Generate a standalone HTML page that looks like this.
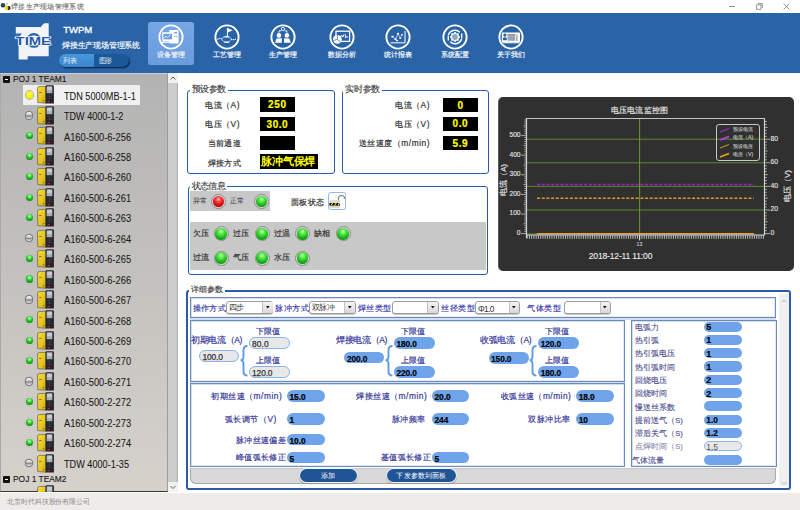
<!DOCTYPE html>
<html><head><meta charset="utf-8">
<style>
*{margin:0;padding:0;box-sizing:border-box}
html,body{width:800px;height:510px;overflow:hidden;background:#fff;font-family:"Liberation Sans",sans-serif}
.a{position:absolute}
.t{position:absolute;white-space:nowrap;line-height:1}
svg{position:absolute;overflow:visible}
</style></head><body>
<svg style="left:0;top:0" width="12" height="12" viewBox="0 0 12 12"><circle cx="7" cy="3.8" r="1.1" fill="#b0dcb0"/><circle cx="3" cy="5.2" r="2.2" fill="#1a3040"/><circle cx="3.2" cy="4.8" r="1" fill="#2a7090"/><circle cx="8.6" cy="8" r="2" fill="#20203a"/><circle cx="6.5" cy="8" r="1.9" fill="#f4d400"/></svg>
<div class="t" style="left:11px;top:2.6px;font-size:7.4px;color:#707070;letter-spacing:0.300px;-webkit-text-stroke:0.1px #707070;"><span id="tx0">焊接生产现场管理系统</span></div>
<div class="a" style="left:729px;top:5.6px;width:6px;height:0.9px;background:#8a8a8a"></div>
<svg style="left:755.5px;top:3.2px" width="7" height="7"><path d="M1.8 0.5 H6.3 V5 M0.5 1.8 H5 V6.3 H0.5 Z" fill="none" stroke="#8a8a8a" stroke-width="0.9"/></svg>
<svg style="left:782.5px;top:3px" width="7" height="7"><path d="M0.5 0.5 L6.5 6.5 M6.5 0.5 L0.5 6.5" stroke="#8a8a8a" stroke-width="0.9"/></svg>
<div class="a" style="left:0px;top:13px;width:800px;height:60px;background:#2a64a6"></div>
<svg style="left:10px;top:20px" width="50" height="42" viewBox="0 0 50 42">
<path d="M5.8 7 L31.3 7 L31.3 6 L34.3 3.3 L38.7 3.3 L38.7 36.2 L17.7 36.2 L17.7 39.5 L8.6 39.5 L8.6 17 L5.8 13.6 Z" fill="#f2f4f7"/>
<path d="M5.8 13.6 L12 13.6 L8.6 17.5Z" fill="#2a64a6"/>
<circle cx="23.9" cy="20.4" r="6.3" fill="none" stroke="#2a64a6" stroke-width="2.3"/>
<text x="5.6" y="24.6" textLength="35.4" lengthAdjust="spacingAndGlyphs" font-family="Liberation Sans" font-weight="bold" font-size="10" fill="#1f5aa6" stroke="#fff" stroke-width="1.2" paint-order="stroke">TIME</text>
</svg>
<div class="t" style="left:63.3px;top:25.2px;font-size:9.6px;color:#fff;letter-spacing:-0.128px;-webkit-text-stroke:0.3px #fff;"><span id="tx1">TWPM</span></div>
<div class="t" style="left:62px;top:42.3px;font-size:7.8px;color:#fff;letter-spacing:-0.200px;-webkit-text-stroke:0.15px #fff;"><span id="tx2">焊接生产现场管理系统</span></div>
<div class="a" style="left:59.4px;top:54.4px;width:70px;height:13.1px;border-radius:6.6px;background:#1a5898;box-shadow:1px 1.2px 1px #0c2a52"></div>
<div class="a" style="left:59.4px;top:54.4px;width:34.4px;height:13.1px;border-radius:6.6px 0 0 6.6px;background:linear-gradient(#4896dc,#3a86cc)"></div>
<div class="t" style="left:63px;top:58px;font-size:6.6px;color:#eaf2fa;letter-spacing:-0.400px;"><span id="tx3">列表</span></div>
<div class="t" style="left:98.75px;top:58px;font-size:6.6px;color:#eaf2fa;letter-spacing:-0.750px;"><span id="tx4">图形</span></div>
<div class="a" style="left:147.5px;top:21.7px;width:46.5px;height:43px;border-radius:2.5px;background:linear-gradient(#76a6e4,#6a9bdc)"></div>
<svg style="left:158.1px;top:23.5px" width="26" height="26" viewBox="0 0 26 26"><circle cx="13" cy="13" r="11.6" fill="none" stroke="#fff" stroke-width="1.9"/><rect x="11.3" y="5.9" width="9.3" height="13.5" rx="0.8" fill="#fff"/><rect x="16.2" y="8" width="3" height="1.3" fill="#6d9fdf"/><rect x="16.2" y="12" width="1.2" height="1" fill="#6d9fdf"/><rect x="18" y="12" width="1.2" height="1" fill="#6d9fdf"/><rect x="4.2" y="8.3" width="11.1" height="9" rx="0.6" fill="#fff"/><rect x="5.4" y="9.8" width="8.6" height="5.6" fill="#6d9fdf"/><path d="M6 14.5 L8 12 L9.5 13.5 L12.5 10.5" stroke="#fff" stroke-width="0.7" fill="none"/><rect x="3.5" y="17.6" width="8" height="1.3" fill="#fff"/></svg>
<div class="t" style="left:21.099999999999994px;width:300px;text-align:center;top:52.2px;font-size:6.8px;color:#f0f4fa;-webkit-text-stroke:0.2px #f0f4fa;"><span id="tx5">设备管理</span></div>
<svg style="left:214.0px;top:23.5px" width="26" height="26" viewBox="0 0 26 26"><circle cx="13" cy="13" r="11.6" fill="none" stroke="#fff" stroke-width="1.9"/><line x1="13.4" y1="3.8" x2="13.4" y2="12.8" stroke="#fff" stroke-width="1"/><path d="M13.4 4 L18.6 6.3 L13.4 8.8Z" fill="#fff"/><ellipse cx="12.6" cy="15.2" rx="4.6" ry="2.8" fill="none" stroke="#fff" stroke-width="0.9" stroke-dasharray="1.4 0.8"/><path d="M3.5 15.5 Q6 13.6 8 15 M17.2 15.2 Q19.5 16.2 22.5 14.8" stroke="#fff" stroke-width="1.1" fill="none" stroke-dasharray="1.2 0.6"/><rect x="10.3" y="12.3" width="4.8" height="1.2" fill="#fff"/><rect x="10.5" y="17.7" width="4.6" height="1.2" fill="#fff"/></svg>
<div class="t" style="left:77px;width:300px;text-align:center;top:52.2px;font-size:6.8px;color:#f0f4fa;-webkit-text-stroke:0.2px #f0f4fa;"><span id="tx6">工艺管理</span></div>
<svg style="left:270.0px;top:23.5px" width="26" height="26" viewBox="0 0 26 26"><circle cx="13" cy="13" r="11.6" fill="none" stroke="#fff" stroke-width="1.9"/><circle cx="12.9" cy="5" r="1.6" fill="none" stroke="#fff" stroke-width="0.9"/><path d="M9 8.8 V6.8 H11.3 M14.5 6.8 H16.9 V8.8" stroke="#fff" stroke-width="0.9" fill="none"/><circle cx="8.9" cy="11.4" r="2.3" fill="#fff"/><circle cx="16.9" cy="11.4" r="2.3" fill="#fff"/><path d="M5 18.7 L6.5 14.6 L11.8 14.2 L11.8 18.7Z M14 18.7 L14 14.2 L19.3 14.6 L20.8 18.7Z" fill="#fff"/></svg>
<div class="t" style="left:133px;width:300px;text-align:center;top:52.2px;font-size:6.8px;color:#f0f4fa;-webkit-text-stroke:0.2px #f0f4fa;"><span id="tx7">生产管理</span></div>
<svg style="left:328.5px;top:23.5px" width="26" height="26" viewBox="0 0 26 26"><circle cx="13" cy="13" r="11.6" fill="none" stroke="#fff" stroke-width="1.9"/><rect x="7" y="7.2" width="13.6" height="10.2" fill="none" stroke="#fff" stroke-width="1.3"/><path d="M11 15 L12.5 11 L14 13 L15.2 10 M16.5 10.5 V14 M18 12 V14" stroke="#fff" stroke-width="0.9" fill="none"/><circle cx="8.4" cy="15.3" r="4.4" fill="#fff"/><path d="M8.4 15.3 V10.9 M8.4 15.3 L4.2 16.5 M8.4 15.3 L11.6 18.3" stroke="#2a64a6" stroke-width="0.7"/></svg>
<div class="t" style="left:191.5px;width:300px;text-align:center;top:52.2px;font-size:6.8px;color:#f0f4fa;-webkit-text-stroke:0.2px #f0f4fa;"><span id="tx8">数据分析</span></div>
<svg style="left:384.7px;top:23.5px" width="26" height="26" viewBox="0 0 26 26"><circle cx="13" cy="13" r="11.6" fill="none" stroke="#fff" stroke-width="1.9"/><path d="M5.6 18.8 H20 V7" stroke="#fff" stroke-width="1" fill="none"/><path d="M7.5 12.6 L10.5 15.2 L13 9.6 L15.2 14.2 L17 10.8" stroke="#fff" stroke-width="0.6" fill="none"/><ellipse cx="7.5" cy="12.6" rx="1.3" ry="0.9" fill="#fff"/><ellipse cx="10.5" cy="15.2" rx="1.2" ry="0.9" fill="#fff"/><ellipse cx="12" cy="16.6" rx="1.2" ry="0.8" fill="#fff"/><ellipse cx="13" cy="9.6" rx="1.1" ry="0.9" fill="#fff"/><ellipse cx="15.2" cy="14.2" rx="1" ry="0.8" fill="#fff"/><ellipse cx="17" cy="10.8" rx="1" ry="0.8" fill="#fff"/></svg>
<div class="t" style="left:247.7px;width:300px;text-align:center;top:52.2px;font-size:6.8px;color:#f0f4fa;-webkit-text-stroke:0.2px #f0f4fa;"><span id="tx9">统计报表</span></div>
<svg style="left:442.2px;top:23.5px" width="26" height="26" viewBox="0 0 26 26"><circle cx="13" cy="13" r="11.6" fill="none" stroke="#fff" stroke-width="1.9"/><path d="M17.8 8.2 A6.9 6.9 0 0 0 6.3 11.5 M8.2 17.8 A6.9 6.9 0 0 0 19.7 14.5" stroke="#fff" stroke-width="1.4" fill="none"/><path d="M19.7 9.5 V14" stroke="#fff" stroke-width="1.4"/><path d="M6.3 12 V16.5" stroke="#fff" stroke-width="1.4"/><circle cx="13" cy="13" r="4.1" fill="#fff"/><g fill="#fff"><rect x="12.2" y="8" width="1.6" height="10"/><rect x="8" y="12.2" width="10" height="1.6"/><rect x="12.2" y="8" width="1.6" height="10" transform="rotate(45 13 13)"/><rect x="12.2" y="8" width="1.6" height="10" transform="rotate(-45 13 13)"/></g><circle cx="13" cy="13" r="2.9" fill="#8aa6c8"/></svg>
<div class="t" style="left:305.2px;width:300px;text-align:center;top:52.2px;font-size:6.8px;color:#f0f4fa;-webkit-text-stroke:0.2px #f0f4fa;"><span id="tx10">系统配置</span></div>
<svg style="left:497.7px;top:23.5px" width="26" height="26" viewBox="0 0 26 26"><circle cx="13" cy="13" r="11.6" fill="none" stroke="#fff" stroke-width="1.9"/><rect x="3.8" y="8.6" width="18.2" height="9.6" rx="0.8" fill="#fff"/><rect x="4.6" y="18" width="16.8" height="1.3" fill="#dfe6ee"/><circle cx="6.9" cy="11.1" r="1.6" fill="#2a64a6"/><path d="M5 16.3 V13.8 Q6.9 12.8 8.8 13.8 V16.3Z" fill="#2a64a6"/><rect x="9.6" y="10" width="7.6" height="6.6" fill="#8894a4"/><path d="M9.6 11.3 H17.2 M9.6 12.6 H17.2 M9.6 13.9 H17.2 M9.6 15.2 H17.2" stroke="#c8d0da" stroke-width="0.4"/><rect x="18.3" y="10.4" width="1.2" height="6.6" fill="#8894a4"/></svg>
<div class="t" style="left:360.7px;width:300px;text-align:center;top:52.2px;font-size:6.8px;color:#f0f4fa;-webkit-text-stroke:0.2px #f0f4fa;"><span id="tx11">关于我们</span></div>
<div class="a" style="left:0px;top:73px;width:168px;height:419px;background:linear-gradient(#b3b3b3,#c4c2be 50%,#d6d1cb);border-left:1px solid #a8a8a8;border-right:1px solid #9c9c9c;border-bottom:1px solid #3a3630;border-top:1px solid #d0d0d0"></div>
<div class="a" style="left:168px;top:73px;width:10px;height:419px;background:#cdcdcd;box-shadow:inset -1px 0 1px #b0b0b0"></div>
<div class="a" style="left:168px;top:73px;width:10px;height:10px;background:#f0f0f0"></div>
<div class="a" style="left:168px;top:482px;width:10px;height:10px;background:#f0f0f0"></div>
<svg style="left:168px;top:73px" width="10" height="10"><path d="M2.5 6.5 L5 4 L7.5 6.5" fill="none" stroke="#606060" stroke-width="1"/></svg>
<svg style="left:168px;top:482px" width="10" height="10"><path d="M2.5 4 L5 6.5 L7.5 4" fill="none" stroke="#606060" stroke-width="1"/></svg>
<div class="a" style="left:178px;top:73px;width:622px;height:420px;background:#fff"></div>
<div class="a" style="left:0px;top:493.4px;width:800px;height:17px;background:#efebe9"></div>
<div class="t" style="left:7px;top:498px;font-size:7.2px;color:#8a8a8a;letter-spacing:-0.083px;"><span id="tx12">北京时代科技股份有限公司</span></div>
<div class="a" style="left:23px;top:85px;width:117px;height:20px;background:#f0f0f0"></div>
<div class="a" style="left:2.75px;top:75.9px;width:7px;height:7px;background:#111;border-radius:1px"></div>
<div class="a" style="left:4.5px;top:78.9px;width:3.5px;height:1.2px;background:#fff"></div>
<div class="t" style="left:12.75px;top:73.5px;font-size:9.8px;color:#111;transform:scaleX(0.8569);transform-origin:0 0;-webkit-text-stroke:0.1px #111;"><span id="tx13">POJ 1 TEAM1</span></div>
<div class="a" style="left:25.55px;top:91.25px;width:7.4px;height:7.4px;border-radius:50%;background:radial-gradient(circle at 50% 40%,#ffff70,#f4f400 50%,#d0d000);box-shadow:0 0 0 0.9px #b0a8c0"></div>
<svg style="left:36.5px;top:85.45px" width="18" height="19" viewBox="0 0 18 19">
<defs><linearGradient id="yg" x1="0" y1="0" x2="1" y2="1"><stop offset="0" stop-color="#f4dc3a"/><stop offset="0.6" stop-color="#e8c41c"/><stop offset="1" stop-color="#c8a010"/></linearGradient></defs>
<path d="M0.5 3.4 Q0.5 1.6 2.3 1.5 L8.8 1.3 L8.8 18.2 L0.7 17.6 Z" fill="url(#yg)" stroke="#4a4a5a" stroke-width="0.6"/>
<rect x="2.2" y="7" width="2.2" height="0.8" fill="#6a5a20"/><rect x="6" y="15.2" width="1.2" height="0.9" fill="#6a5a20"/>
<path d="M8.6 1.2 Q8.6 0.3 9.6 0.3 L15.6 0.3 Q16.9 0.3 16.9 1.6 L16.9 18.4 L8.6 18.4 Z" fill="#22222a"/>
<rect x="9.6" y="1.3" width="5.8" height="7" rx="0.6" fill="#a8b0b4"/><rect x="10.2" y="2" width="4.6" height="3.2" fill="#c8ced0"/>
<path d="M9.9 10 H15.2 M9.9 11.8 H15.2 M9.9 13.6 H15.2 M12.5 9.2 V14.4" stroke="#44444e" stroke-width="0.6"/>
<rect x="10.6" y="15.9" width="2" height="1.3" fill="#e02020"/>
</svg>
<div class="t" style="left:64.4px;top:91.60px;font-size:10.2px;color:#151515;transform:scaleX(0.8993);transform-origin:0 0;-webkit-text-stroke:0.05px #151515;"><span id="tx14">TDN 5000MB-1-1</span></div>
<div class="a" style="left:25.70px;top:112.00px;width:6.8px;height:6.8px;border-radius:50%;background:linear-gradient(#f8f8f8 0,#d4d4d4 35%,#858585 55%,#b8b8b8 75%,#e4e4e4 100%);box-shadow:0 0 0 1px #7a7a7a, 0 0 0 2px rgba(190,180,200,.45)"></div>
<svg style="left:36.5px;top:105.90px" width="18" height="19" viewBox="0 0 18 19">
<defs><linearGradient id="yg" x1="0" y1="0" x2="1" y2="1"><stop offset="0" stop-color="#f4dc3a"/><stop offset="0.6" stop-color="#e8c41c"/><stop offset="1" stop-color="#c8a010"/></linearGradient></defs>
<path d="M0.5 3.4 Q0.5 1.6 2.3 1.5 L8.8 1.3 L8.8 18.2 L0.7 17.6 Z" fill="url(#yg)" stroke="#4a4a5a" stroke-width="0.6"/>
<rect x="2.2" y="7" width="2.2" height="0.8" fill="#6a5a20"/><rect x="6" y="15.2" width="1.2" height="0.9" fill="#6a5a20"/>
<path d="M8.6 1.2 Q8.6 0.3 9.6 0.3 L15.6 0.3 Q16.9 0.3 16.9 1.6 L16.9 18.4 L8.6 18.4 Z" fill="#22222a"/>
<rect x="9.6" y="1.3" width="5.8" height="7" rx="0.6" fill="#a8b0b4"/><rect x="10.2" y="2" width="4.6" height="3.2" fill="#c8ced0"/>
<path d="M9.9 10 H15.2 M9.9 11.8 H15.2 M9.9 13.6 H15.2 M12.5 9.2 V14.4" stroke="#44444e" stroke-width="0.6"/>
<rect x="10.6" y="15.9" width="2" height="1.3" fill="#e02020"/>
</svg>
<div class="t" style="left:64.4px;top:112.05px;font-size:10.2px;color:#151515;transform:scaleX(0.8891);transform-origin:0 0;-webkit-text-stroke:0.05px #151515;"><span id="tx15">TDW 4000-1-2</span></div>
<div class="a" style="left:23.75px;top:130.35px;width:11px;height:11px;border-radius:50%;background:radial-gradient(circle,transparent 58%,rgba(200,170,200,.6) 62%,transparent 72%)"></div>
<div class="a" style="left:25.50px;top:132.25px;width:7.2px;height:7.2px;border-radius:50%;background:radial-gradient(circle at 50% 32%,#f0fff0 0,#7af07a 18%,#22c422 45%,#0c940c 75%,#066406 100%)"></div>
<svg style="left:36.5px;top:126.35px" width="18" height="19" viewBox="0 0 18 19">
<defs><linearGradient id="yg" x1="0" y1="0" x2="1" y2="1"><stop offset="0" stop-color="#f4dc3a"/><stop offset="0.6" stop-color="#e8c41c"/><stop offset="1" stop-color="#c8a010"/></linearGradient></defs>
<path d="M0.5 3.4 Q0.5 1.6 2.3 1.5 L8.8 1.3 L8.8 18.2 L0.7 17.6 Z" fill="url(#yg)" stroke="#4a4a5a" stroke-width="0.6"/>
<rect x="2.2" y="7" width="2.2" height="0.8" fill="#6a5a20"/><rect x="6" y="15.2" width="1.2" height="0.9" fill="#6a5a20"/>
<path d="M8.6 1.2 Q8.6 0.3 9.6 0.3 L15.6 0.3 Q16.9 0.3 16.9 1.6 L16.9 18.4 L8.6 18.4 Z" fill="#22222a"/>
<rect x="9.6" y="1.3" width="5.8" height="7" rx="0.6" fill="#a8b0b4"/><rect x="10.2" y="2" width="4.6" height="3.2" fill="#c8ced0"/>
<path d="M9.9 10 H15.2 M9.9 11.8 H15.2 M9.9 13.6 H15.2 M12.5 9.2 V14.4" stroke="#44444e" stroke-width="0.6"/>
<rect x="10.6" y="15.9" width="2" height="1.3" fill="#e02020"/>
</svg>
<div class="t" style="left:64.4px;top:132.50px;font-size:10.2px;color:#151515;transform:scaleX(0.9112);transform-origin:0 0;-webkit-text-stroke:0.05px #151515;"><span id="tx16">A160-500-6-256</span></div>
<div class="a" style="left:23.75px;top:150.80px;width:11px;height:11px;border-radius:50%;background:radial-gradient(circle,transparent 58%,rgba(200,170,200,.6) 62%,transparent 72%)"></div>
<div class="a" style="left:25.50px;top:152.70px;width:7.2px;height:7.2px;border-radius:50%;background:radial-gradient(circle at 50% 32%,#f0fff0 0,#7af07a 18%,#22c422 45%,#0c940c 75%,#066406 100%)"></div>
<svg style="left:36.5px;top:146.80px" width="18" height="19" viewBox="0 0 18 19">
<defs><linearGradient id="yg" x1="0" y1="0" x2="1" y2="1"><stop offset="0" stop-color="#f4dc3a"/><stop offset="0.6" stop-color="#e8c41c"/><stop offset="1" stop-color="#c8a010"/></linearGradient></defs>
<path d="M0.5 3.4 Q0.5 1.6 2.3 1.5 L8.8 1.3 L8.8 18.2 L0.7 17.6 Z" fill="url(#yg)" stroke="#4a4a5a" stroke-width="0.6"/>
<rect x="2.2" y="7" width="2.2" height="0.8" fill="#6a5a20"/><rect x="6" y="15.2" width="1.2" height="0.9" fill="#6a5a20"/>
<path d="M8.6 1.2 Q8.6 0.3 9.6 0.3 L15.6 0.3 Q16.9 0.3 16.9 1.6 L16.9 18.4 L8.6 18.4 Z" fill="#22222a"/>
<rect x="9.6" y="1.3" width="5.8" height="7" rx="0.6" fill="#a8b0b4"/><rect x="10.2" y="2" width="4.6" height="3.2" fill="#c8ced0"/>
<path d="M9.9 10 H15.2 M9.9 11.8 H15.2 M9.9 13.6 H15.2 M12.5 9.2 V14.4" stroke="#44444e" stroke-width="0.6"/>
<rect x="10.6" y="15.9" width="2" height="1.3" fill="#e02020"/>
</svg>
<div class="t" style="left:64.4px;top:152.95px;font-size:10.2px;color:#151515;transform:scaleX(0.9112);transform-origin:0 0;-webkit-text-stroke:0.05px #151515;"><span id="tx17">A160-500-6-258</span></div>
<div class="a" style="left:23.75px;top:171.25px;width:11px;height:11px;border-radius:50%;background:radial-gradient(circle,transparent 58%,rgba(200,170,200,.6) 62%,transparent 72%)"></div>
<div class="a" style="left:25.50px;top:173.15px;width:7.2px;height:7.2px;border-radius:50%;background:radial-gradient(circle at 50% 32%,#f0fff0 0,#7af07a 18%,#22c422 45%,#0c940c 75%,#066406 100%)"></div>
<svg style="left:36.5px;top:167.25px" width="18" height="19" viewBox="0 0 18 19">
<defs><linearGradient id="yg" x1="0" y1="0" x2="1" y2="1"><stop offset="0" stop-color="#f4dc3a"/><stop offset="0.6" stop-color="#e8c41c"/><stop offset="1" stop-color="#c8a010"/></linearGradient></defs>
<path d="M0.5 3.4 Q0.5 1.6 2.3 1.5 L8.8 1.3 L8.8 18.2 L0.7 17.6 Z" fill="url(#yg)" stroke="#4a4a5a" stroke-width="0.6"/>
<rect x="2.2" y="7" width="2.2" height="0.8" fill="#6a5a20"/><rect x="6" y="15.2" width="1.2" height="0.9" fill="#6a5a20"/>
<path d="M8.6 1.2 Q8.6 0.3 9.6 0.3 L15.6 0.3 Q16.9 0.3 16.9 1.6 L16.9 18.4 L8.6 18.4 Z" fill="#22222a"/>
<rect x="9.6" y="1.3" width="5.8" height="7" rx="0.6" fill="#a8b0b4"/><rect x="10.2" y="2" width="4.6" height="3.2" fill="#c8ced0"/>
<path d="M9.9 10 H15.2 M9.9 11.8 H15.2 M9.9 13.6 H15.2 M12.5 9.2 V14.4" stroke="#44444e" stroke-width="0.6"/>
<rect x="10.6" y="15.9" width="2" height="1.3" fill="#e02020"/>
</svg>
<div class="t" style="left:64.4px;top:173.40px;font-size:10.2px;color:#151515;transform:scaleX(0.9112);transform-origin:0 0;-webkit-text-stroke:0.05px #151515;"><span id="tx18">A160-500-6-260</span></div>
<div class="a" style="left:23.75px;top:191.70px;width:11px;height:11px;border-radius:50%;background:radial-gradient(circle,transparent 58%,rgba(200,170,200,.6) 62%,transparent 72%)"></div>
<div class="a" style="left:25.50px;top:193.60px;width:7.2px;height:7.2px;border-radius:50%;background:radial-gradient(circle at 50% 32%,#f0fff0 0,#7af07a 18%,#22c422 45%,#0c940c 75%,#066406 100%)"></div>
<svg style="left:36.5px;top:187.70px" width="18" height="19" viewBox="0 0 18 19">
<defs><linearGradient id="yg" x1="0" y1="0" x2="1" y2="1"><stop offset="0" stop-color="#f4dc3a"/><stop offset="0.6" stop-color="#e8c41c"/><stop offset="1" stop-color="#c8a010"/></linearGradient></defs>
<path d="M0.5 3.4 Q0.5 1.6 2.3 1.5 L8.8 1.3 L8.8 18.2 L0.7 17.6 Z" fill="url(#yg)" stroke="#4a4a5a" stroke-width="0.6"/>
<rect x="2.2" y="7" width="2.2" height="0.8" fill="#6a5a20"/><rect x="6" y="15.2" width="1.2" height="0.9" fill="#6a5a20"/>
<path d="M8.6 1.2 Q8.6 0.3 9.6 0.3 L15.6 0.3 Q16.9 0.3 16.9 1.6 L16.9 18.4 L8.6 18.4 Z" fill="#22222a"/>
<rect x="9.6" y="1.3" width="5.8" height="7" rx="0.6" fill="#a8b0b4"/><rect x="10.2" y="2" width="4.6" height="3.2" fill="#c8ced0"/>
<path d="M9.9 10 H15.2 M9.9 11.8 H15.2 M9.9 13.6 H15.2 M12.5 9.2 V14.4" stroke="#44444e" stroke-width="0.6"/>
<rect x="10.6" y="15.9" width="2" height="1.3" fill="#e02020"/>
</svg>
<div class="t" style="left:64.4px;top:193.85px;font-size:10.2px;color:#151515;transform:scaleX(0.9112);transform-origin:0 0;-webkit-text-stroke:0.05px #151515;"><span id="tx19">A160-500-6-261</span></div>
<div class="a" style="left:23.75px;top:212.15px;width:11px;height:11px;border-radius:50%;background:radial-gradient(circle,transparent 58%,rgba(200,170,200,.6) 62%,transparent 72%)"></div>
<div class="a" style="left:25.50px;top:214.05px;width:7.2px;height:7.2px;border-radius:50%;background:radial-gradient(circle at 50% 32%,#f0fff0 0,#7af07a 18%,#22c422 45%,#0c940c 75%,#066406 100%)"></div>
<svg style="left:36.5px;top:208.15px" width="18" height="19" viewBox="0 0 18 19">
<defs><linearGradient id="yg" x1="0" y1="0" x2="1" y2="1"><stop offset="0" stop-color="#f4dc3a"/><stop offset="0.6" stop-color="#e8c41c"/><stop offset="1" stop-color="#c8a010"/></linearGradient></defs>
<path d="M0.5 3.4 Q0.5 1.6 2.3 1.5 L8.8 1.3 L8.8 18.2 L0.7 17.6 Z" fill="url(#yg)" stroke="#4a4a5a" stroke-width="0.6"/>
<rect x="2.2" y="7" width="2.2" height="0.8" fill="#6a5a20"/><rect x="6" y="15.2" width="1.2" height="0.9" fill="#6a5a20"/>
<path d="M8.6 1.2 Q8.6 0.3 9.6 0.3 L15.6 0.3 Q16.9 0.3 16.9 1.6 L16.9 18.4 L8.6 18.4 Z" fill="#22222a"/>
<rect x="9.6" y="1.3" width="5.8" height="7" rx="0.6" fill="#a8b0b4"/><rect x="10.2" y="2" width="4.6" height="3.2" fill="#c8ced0"/>
<path d="M9.9 10 H15.2 M9.9 11.8 H15.2 M9.9 13.6 H15.2 M12.5 9.2 V14.4" stroke="#44444e" stroke-width="0.6"/>
<rect x="10.6" y="15.9" width="2" height="1.3" fill="#e02020"/>
</svg>
<div class="t" style="left:64.4px;top:214.30px;font-size:10.2px;color:#151515;transform:scaleX(0.9112);transform-origin:0 0;-webkit-text-stroke:0.05px #151515;"><span id="tx20">A160-500-6-263</span></div>
<div class="a" style="left:25.70px;top:234.70px;width:6.8px;height:6.8px;border-radius:50%;background:linear-gradient(#f8f8f8 0,#d4d4d4 35%,#858585 55%,#b8b8b8 75%,#e4e4e4 100%);box-shadow:0 0 0 1px #7a7a7a, 0 0 0 2px rgba(190,180,200,.45)"></div>
<svg style="left:36.5px;top:228.60px" width="18" height="19" viewBox="0 0 18 19">
<defs><linearGradient id="yg" x1="0" y1="0" x2="1" y2="1"><stop offset="0" stop-color="#f4dc3a"/><stop offset="0.6" stop-color="#e8c41c"/><stop offset="1" stop-color="#c8a010"/></linearGradient></defs>
<path d="M0.5 3.4 Q0.5 1.6 2.3 1.5 L8.8 1.3 L8.8 18.2 L0.7 17.6 Z" fill="url(#yg)" stroke="#4a4a5a" stroke-width="0.6"/>
<rect x="2.2" y="7" width="2.2" height="0.8" fill="#6a5a20"/><rect x="6" y="15.2" width="1.2" height="0.9" fill="#6a5a20"/>
<path d="M8.6 1.2 Q8.6 0.3 9.6 0.3 L15.6 0.3 Q16.9 0.3 16.9 1.6 L16.9 18.4 L8.6 18.4 Z" fill="#22222a"/>
<rect x="9.6" y="1.3" width="5.8" height="7" rx="0.6" fill="#a8b0b4"/><rect x="10.2" y="2" width="4.6" height="3.2" fill="#c8ced0"/>
<path d="M9.9 10 H15.2 M9.9 11.8 H15.2 M9.9 13.6 H15.2 M12.5 9.2 V14.4" stroke="#44444e" stroke-width="0.6"/>
<rect x="10.6" y="15.9" width="2" height="1.3" fill="#e02020"/>
</svg>
<div class="t" style="left:64.4px;top:234.75px;font-size:10.2px;color:#151515;transform:scaleX(0.9112);transform-origin:0 0;-webkit-text-stroke:0.05px #151515;"><span id="tx21">A160-500-6-264</span></div>
<div class="a" style="left:23.75px;top:253.05px;width:11px;height:11px;border-radius:50%;background:radial-gradient(circle,transparent 58%,rgba(200,170,200,.6) 62%,transparent 72%)"></div>
<div class="a" style="left:25.50px;top:254.95px;width:7.2px;height:7.2px;border-radius:50%;background:radial-gradient(circle at 50% 32%,#f0fff0 0,#7af07a 18%,#22c422 45%,#0c940c 75%,#066406 100%)"></div>
<svg style="left:36.5px;top:249.05px" width="18" height="19" viewBox="0 0 18 19">
<defs><linearGradient id="yg" x1="0" y1="0" x2="1" y2="1"><stop offset="0" stop-color="#f4dc3a"/><stop offset="0.6" stop-color="#e8c41c"/><stop offset="1" stop-color="#c8a010"/></linearGradient></defs>
<path d="M0.5 3.4 Q0.5 1.6 2.3 1.5 L8.8 1.3 L8.8 18.2 L0.7 17.6 Z" fill="url(#yg)" stroke="#4a4a5a" stroke-width="0.6"/>
<rect x="2.2" y="7" width="2.2" height="0.8" fill="#6a5a20"/><rect x="6" y="15.2" width="1.2" height="0.9" fill="#6a5a20"/>
<path d="M8.6 1.2 Q8.6 0.3 9.6 0.3 L15.6 0.3 Q16.9 0.3 16.9 1.6 L16.9 18.4 L8.6 18.4 Z" fill="#22222a"/>
<rect x="9.6" y="1.3" width="5.8" height="7" rx="0.6" fill="#a8b0b4"/><rect x="10.2" y="2" width="4.6" height="3.2" fill="#c8ced0"/>
<path d="M9.9 10 H15.2 M9.9 11.8 H15.2 M9.9 13.6 H15.2 M12.5 9.2 V14.4" stroke="#44444e" stroke-width="0.6"/>
<rect x="10.6" y="15.9" width="2" height="1.3" fill="#e02020"/>
</svg>
<div class="t" style="left:64.4px;top:255.20px;font-size:10.2px;color:#151515;transform:scaleX(0.9112);transform-origin:0 0;-webkit-text-stroke:0.05px #151515;"><span id="tx22">A160-500-6-265</span></div>
<div class="a" style="left:23.75px;top:273.50px;width:11px;height:11px;border-radius:50%;background:radial-gradient(circle,transparent 58%,rgba(200,170,200,.6) 62%,transparent 72%)"></div>
<div class="a" style="left:25.50px;top:275.40px;width:7.2px;height:7.2px;border-radius:50%;background:radial-gradient(circle at 50% 32%,#f0fff0 0,#7af07a 18%,#22c422 45%,#0c940c 75%,#066406 100%)"></div>
<svg style="left:36.5px;top:269.50px" width="18" height="19" viewBox="0 0 18 19">
<defs><linearGradient id="yg" x1="0" y1="0" x2="1" y2="1"><stop offset="0" stop-color="#f4dc3a"/><stop offset="0.6" stop-color="#e8c41c"/><stop offset="1" stop-color="#c8a010"/></linearGradient></defs>
<path d="M0.5 3.4 Q0.5 1.6 2.3 1.5 L8.8 1.3 L8.8 18.2 L0.7 17.6 Z" fill="url(#yg)" stroke="#4a4a5a" stroke-width="0.6"/>
<rect x="2.2" y="7" width="2.2" height="0.8" fill="#6a5a20"/><rect x="6" y="15.2" width="1.2" height="0.9" fill="#6a5a20"/>
<path d="M8.6 1.2 Q8.6 0.3 9.6 0.3 L15.6 0.3 Q16.9 0.3 16.9 1.6 L16.9 18.4 L8.6 18.4 Z" fill="#22222a"/>
<rect x="9.6" y="1.3" width="5.8" height="7" rx="0.6" fill="#a8b0b4"/><rect x="10.2" y="2" width="4.6" height="3.2" fill="#c8ced0"/>
<path d="M9.9 10 H15.2 M9.9 11.8 H15.2 M9.9 13.6 H15.2 M12.5 9.2 V14.4" stroke="#44444e" stroke-width="0.6"/>
<rect x="10.6" y="15.9" width="2" height="1.3" fill="#e02020"/>
</svg>
<div class="t" style="left:64.4px;top:275.65px;font-size:10.2px;color:#151515;transform:scaleX(0.9112);transform-origin:0 0;-webkit-text-stroke:0.05px #151515;"><span id="tx23">A160-500-6-266</span></div>
<div class="a" style="left:25.70px;top:296.05px;width:6.8px;height:6.8px;border-radius:50%;background:linear-gradient(#f8f8f8 0,#d4d4d4 35%,#858585 55%,#b8b8b8 75%,#e4e4e4 100%);box-shadow:0 0 0 1px #7a7a7a, 0 0 0 2px rgba(190,180,200,.45)"></div>
<svg style="left:36.5px;top:289.95px" width="18" height="19" viewBox="0 0 18 19">
<defs><linearGradient id="yg" x1="0" y1="0" x2="1" y2="1"><stop offset="0" stop-color="#f4dc3a"/><stop offset="0.6" stop-color="#e8c41c"/><stop offset="1" stop-color="#c8a010"/></linearGradient></defs>
<path d="M0.5 3.4 Q0.5 1.6 2.3 1.5 L8.8 1.3 L8.8 18.2 L0.7 17.6 Z" fill="url(#yg)" stroke="#4a4a5a" stroke-width="0.6"/>
<rect x="2.2" y="7" width="2.2" height="0.8" fill="#6a5a20"/><rect x="6" y="15.2" width="1.2" height="0.9" fill="#6a5a20"/>
<path d="M8.6 1.2 Q8.6 0.3 9.6 0.3 L15.6 0.3 Q16.9 0.3 16.9 1.6 L16.9 18.4 L8.6 18.4 Z" fill="#22222a"/>
<rect x="9.6" y="1.3" width="5.8" height="7" rx="0.6" fill="#a8b0b4"/><rect x="10.2" y="2" width="4.6" height="3.2" fill="#c8ced0"/>
<path d="M9.9 10 H15.2 M9.9 11.8 H15.2 M9.9 13.6 H15.2 M12.5 9.2 V14.4" stroke="#44444e" stroke-width="0.6"/>
<rect x="10.6" y="15.9" width="2" height="1.3" fill="#e02020"/>
</svg>
<div class="t" style="left:64.4px;top:296.10px;font-size:10.2px;color:#151515;transform:scaleX(0.9112);transform-origin:0 0;-webkit-text-stroke:0.05px #151515;"><span id="tx24">A160-500-6-267</span></div>
<div class="a" style="left:23.75px;top:314.40px;width:11px;height:11px;border-radius:50%;background:radial-gradient(circle,transparent 58%,rgba(200,170,200,.6) 62%,transparent 72%)"></div>
<div class="a" style="left:25.50px;top:316.30px;width:7.2px;height:7.2px;border-radius:50%;background:radial-gradient(circle at 50% 32%,#f0fff0 0,#7af07a 18%,#22c422 45%,#0c940c 75%,#066406 100%)"></div>
<svg style="left:36.5px;top:310.40px" width="18" height="19" viewBox="0 0 18 19">
<defs><linearGradient id="yg" x1="0" y1="0" x2="1" y2="1"><stop offset="0" stop-color="#f4dc3a"/><stop offset="0.6" stop-color="#e8c41c"/><stop offset="1" stop-color="#c8a010"/></linearGradient></defs>
<path d="M0.5 3.4 Q0.5 1.6 2.3 1.5 L8.8 1.3 L8.8 18.2 L0.7 17.6 Z" fill="url(#yg)" stroke="#4a4a5a" stroke-width="0.6"/>
<rect x="2.2" y="7" width="2.2" height="0.8" fill="#6a5a20"/><rect x="6" y="15.2" width="1.2" height="0.9" fill="#6a5a20"/>
<path d="M8.6 1.2 Q8.6 0.3 9.6 0.3 L15.6 0.3 Q16.9 0.3 16.9 1.6 L16.9 18.4 L8.6 18.4 Z" fill="#22222a"/>
<rect x="9.6" y="1.3" width="5.8" height="7" rx="0.6" fill="#a8b0b4"/><rect x="10.2" y="2" width="4.6" height="3.2" fill="#c8ced0"/>
<path d="M9.9 10 H15.2 M9.9 11.8 H15.2 M9.9 13.6 H15.2 M12.5 9.2 V14.4" stroke="#44444e" stroke-width="0.6"/>
<rect x="10.6" y="15.9" width="2" height="1.3" fill="#e02020"/>
</svg>
<div class="t" style="left:64.4px;top:316.55px;font-size:10.2px;color:#151515;transform:scaleX(0.9112);transform-origin:0 0;-webkit-text-stroke:0.05px #151515;"><span id="tx25">A160-500-6-268</span></div>
<div class="a" style="left:23.75px;top:334.85px;width:11px;height:11px;border-radius:50%;background:radial-gradient(circle,transparent 58%,rgba(200,170,200,.6) 62%,transparent 72%)"></div>
<div class="a" style="left:25.50px;top:336.75px;width:7.2px;height:7.2px;border-radius:50%;background:radial-gradient(circle at 50% 32%,#f0fff0 0,#7af07a 18%,#22c422 45%,#0c940c 75%,#066406 100%)"></div>
<svg style="left:36.5px;top:330.85px" width="18" height="19" viewBox="0 0 18 19">
<defs><linearGradient id="yg" x1="0" y1="0" x2="1" y2="1"><stop offset="0" stop-color="#f4dc3a"/><stop offset="0.6" stop-color="#e8c41c"/><stop offset="1" stop-color="#c8a010"/></linearGradient></defs>
<path d="M0.5 3.4 Q0.5 1.6 2.3 1.5 L8.8 1.3 L8.8 18.2 L0.7 17.6 Z" fill="url(#yg)" stroke="#4a4a5a" stroke-width="0.6"/>
<rect x="2.2" y="7" width="2.2" height="0.8" fill="#6a5a20"/><rect x="6" y="15.2" width="1.2" height="0.9" fill="#6a5a20"/>
<path d="M8.6 1.2 Q8.6 0.3 9.6 0.3 L15.6 0.3 Q16.9 0.3 16.9 1.6 L16.9 18.4 L8.6 18.4 Z" fill="#22222a"/>
<rect x="9.6" y="1.3" width="5.8" height="7" rx="0.6" fill="#a8b0b4"/><rect x="10.2" y="2" width="4.6" height="3.2" fill="#c8ced0"/>
<path d="M9.9 10 H15.2 M9.9 11.8 H15.2 M9.9 13.6 H15.2 M12.5 9.2 V14.4" stroke="#44444e" stroke-width="0.6"/>
<rect x="10.6" y="15.9" width="2" height="1.3" fill="#e02020"/>
</svg>
<div class="t" style="left:64.4px;top:337.00px;font-size:10.2px;color:#151515;transform:scaleX(0.9112);transform-origin:0 0;-webkit-text-stroke:0.05px #151515;"><span id="tx26">A160-500-6-269</span></div>
<div class="a" style="left:23.75px;top:355.30px;width:11px;height:11px;border-radius:50%;background:radial-gradient(circle,transparent 58%,rgba(200,170,200,.6) 62%,transparent 72%)"></div>
<div class="a" style="left:25.50px;top:357.20px;width:7.2px;height:7.2px;border-radius:50%;background:radial-gradient(circle at 50% 32%,#f0fff0 0,#7af07a 18%,#22c422 45%,#0c940c 75%,#066406 100%)"></div>
<svg style="left:36.5px;top:351.30px" width="18" height="19" viewBox="0 0 18 19">
<defs><linearGradient id="yg" x1="0" y1="0" x2="1" y2="1"><stop offset="0" stop-color="#f4dc3a"/><stop offset="0.6" stop-color="#e8c41c"/><stop offset="1" stop-color="#c8a010"/></linearGradient></defs>
<path d="M0.5 3.4 Q0.5 1.6 2.3 1.5 L8.8 1.3 L8.8 18.2 L0.7 17.6 Z" fill="url(#yg)" stroke="#4a4a5a" stroke-width="0.6"/>
<rect x="2.2" y="7" width="2.2" height="0.8" fill="#6a5a20"/><rect x="6" y="15.2" width="1.2" height="0.9" fill="#6a5a20"/>
<path d="M8.6 1.2 Q8.6 0.3 9.6 0.3 L15.6 0.3 Q16.9 0.3 16.9 1.6 L16.9 18.4 L8.6 18.4 Z" fill="#22222a"/>
<rect x="9.6" y="1.3" width="5.8" height="7" rx="0.6" fill="#a8b0b4"/><rect x="10.2" y="2" width="4.6" height="3.2" fill="#c8ced0"/>
<path d="M9.9 10 H15.2 M9.9 11.8 H15.2 M9.9 13.6 H15.2 M12.5 9.2 V14.4" stroke="#44444e" stroke-width="0.6"/>
<rect x="10.6" y="15.9" width="2" height="1.3" fill="#e02020"/>
</svg>
<div class="t" style="left:64.4px;top:357.45px;font-size:10.2px;color:#151515;transform:scaleX(0.9112);transform-origin:0 0;-webkit-text-stroke:0.05px #151515;"><span id="tx27">A160-500-6-270</span></div>
<div class="a" style="left:25.70px;top:377.85px;width:6.8px;height:6.8px;border-radius:50%;background:linear-gradient(#f8f8f8 0,#d4d4d4 35%,#858585 55%,#b8b8b8 75%,#e4e4e4 100%);box-shadow:0 0 0 1px #7a7a7a, 0 0 0 2px rgba(190,180,200,.45)"></div>
<svg style="left:36.5px;top:371.75px" width="18" height="19" viewBox="0 0 18 19">
<defs><linearGradient id="yg" x1="0" y1="0" x2="1" y2="1"><stop offset="0" stop-color="#f4dc3a"/><stop offset="0.6" stop-color="#e8c41c"/><stop offset="1" stop-color="#c8a010"/></linearGradient></defs>
<path d="M0.5 3.4 Q0.5 1.6 2.3 1.5 L8.8 1.3 L8.8 18.2 L0.7 17.6 Z" fill="url(#yg)" stroke="#4a4a5a" stroke-width="0.6"/>
<rect x="2.2" y="7" width="2.2" height="0.8" fill="#6a5a20"/><rect x="6" y="15.2" width="1.2" height="0.9" fill="#6a5a20"/>
<path d="M8.6 1.2 Q8.6 0.3 9.6 0.3 L15.6 0.3 Q16.9 0.3 16.9 1.6 L16.9 18.4 L8.6 18.4 Z" fill="#22222a"/>
<rect x="9.6" y="1.3" width="5.8" height="7" rx="0.6" fill="#a8b0b4"/><rect x="10.2" y="2" width="4.6" height="3.2" fill="#c8ced0"/>
<path d="M9.9 10 H15.2 M9.9 11.8 H15.2 M9.9 13.6 H15.2 M12.5 9.2 V14.4" stroke="#44444e" stroke-width="0.6"/>
<rect x="10.6" y="15.9" width="2" height="1.3" fill="#e02020"/>
</svg>
<div class="t" style="left:64.4px;top:377.90px;font-size:10.2px;color:#151515;transform:scaleX(0.9112);transform-origin:0 0;-webkit-text-stroke:0.05px #151515;"><span id="tx28">A160-500-6-271</span></div>
<div class="a" style="left:23.75px;top:396.20px;width:11px;height:11px;border-radius:50%;background:radial-gradient(circle,transparent 58%,rgba(200,170,200,.6) 62%,transparent 72%)"></div>
<div class="a" style="left:25.50px;top:398.10px;width:7.2px;height:7.2px;border-radius:50%;background:radial-gradient(circle at 50% 32%,#f0fff0 0,#7af07a 18%,#22c422 45%,#0c940c 75%,#066406 100%)"></div>
<svg style="left:36.5px;top:392.20px" width="18" height="19" viewBox="0 0 18 19">
<defs><linearGradient id="yg" x1="0" y1="0" x2="1" y2="1"><stop offset="0" stop-color="#f4dc3a"/><stop offset="0.6" stop-color="#e8c41c"/><stop offset="1" stop-color="#c8a010"/></linearGradient></defs>
<path d="M0.5 3.4 Q0.5 1.6 2.3 1.5 L8.8 1.3 L8.8 18.2 L0.7 17.6 Z" fill="url(#yg)" stroke="#4a4a5a" stroke-width="0.6"/>
<rect x="2.2" y="7" width="2.2" height="0.8" fill="#6a5a20"/><rect x="6" y="15.2" width="1.2" height="0.9" fill="#6a5a20"/>
<path d="M8.6 1.2 Q8.6 0.3 9.6 0.3 L15.6 0.3 Q16.9 0.3 16.9 1.6 L16.9 18.4 L8.6 18.4 Z" fill="#22222a"/>
<rect x="9.6" y="1.3" width="5.8" height="7" rx="0.6" fill="#a8b0b4"/><rect x="10.2" y="2" width="4.6" height="3.2" fill="#c8ced0"/>
<path d="M9.9 10 H15.2 M9.9 11.8 H15.2 M9.9 13.6 H15.2 M12.5 9.2 V14.4" stroke="#44444e" stroke-width="0.6"/>
<rect x="10.6" y="15.9" width="2" height="1.3" fill="#e02020"/>
</svg>
<div class="t" style="left:64.4px;top:398.35px;font-size:10.2px;color:#151515;transform:scaleX(0.9112);transform-origin:0 0;-webkit-text-stroke:0.05px #151515;"><span id="tx29">A160-500-2-272</span></div>
<div class="a" style="left:23.75px;top:416.65px;width:11px;height:11px;border-radius:50%;background:radial-gradient(circle,transparent 58%,rgba(200,170,200,.6) 62%,transparent 72%)"></div>
<div class="a" style="left:25.50px;top:418.55px;width:7.2px;height:7.2px;border-radius:50%;background:radial-gradient(circle at 50% 32%,#f0fff0 0,#7af07a 18%,#22c422 45%,#0c940c 75%,#066406 100%)"></div>
<svg style="left:36.5px;top:412.65px" width="18" height="19" viewBox="0 0 18 19">
<defs><linearGradient id="yg" x1="0" y1="0" x2="1" y2="1"><stop offset="0" stop-color="#f4dc3a"/><stop offset="0.6" stop-color="#e8c41c"/><stop offset="1" stop-color="#c8a010"/></linearGradient></defs>
<path d="M0.5 3.4 Q0.5 1.6 2.3 1.5 L8.8 1.3 L8.8 18.2 L0.7 17.6 Z" fill="url(#yg)" stroke="#4a4a5a" stroke-width="0.6"/>
<rect x="2.2" y="7" width="2.2" height="0.8" fill="#6a5a20"/><rect x="6" y="15.2" width="1.2" height="0.9" fill="#6a5a20"/>
<path d="M8.6 1.2 Q8.6 0.3 9.6 0.3 L15.6 0.3 Q16.9 0.3 16.9 1.6 L16.9 18.4 L8.6 18.4 Z" fill="#22222a"/>
<rect x="9.6" y="1.3" width="5.8" height="7" rx="0.6" fill="#a8b0b4"/><rect x="10.2" y="2" width="4.6" height="3.2" fill="#c8ced0"/>
<path d="M9.9 10 H15.2 M9.9 11.8 H15.2 M9.9 13.6 H15.2 M12.5 9.2 V14.4" stroke="#44444e" stroke-width="0.6"/>
<rect x="10.6" y="15.9" width="2" height="1.3" fill="#e02020"/>
</svg>
<div class="t" style="left:64.4px;top:418.80px;font-size:10.2px;color:#151515;transform:scaleX(0.9112);transform-origin:0 0;-webkit-text-stroke:0.05px #151515;"><span id="tx30">A160-500-2-273</span></div>
<div class="a" style="left:23.75px;top:437.10px;width:11px;height:11px;border-radius:50%;background:radial-gradient(circle,transparent 58%,rgba(200,170,200,.6) 62%,transparent 72%)"></div>
<div class="a" style="left:25.50px;top:439.00px;width:7.2px;height:7.2px;border-radius:50%;background:radial-gradient(circle at 50% 32%,#f0fff0 0,#7af07a 18%,#22c422 45%,#0c940c 75%,#066406 100%)"></div>
<svg style="left:36.5px;top:433.10px" width="18" height="19" viewBox="0 0 18 19">
<defs><linearGradient id="yg" x1="0" y1="0" x2="1" y2="1"><stop offset="0" stop-color="#f4dc3a"/><stop offset="0.6" stop-color="#e8c41c"/><stop offset="1" stop-color="#c8a010"/></linearGradient></defs>
<path d="M0.5 3.4 Q0.5 1.6 2.3 1.5 L8.8 1.3 L8.8 18.2 L0.7 17.6 Z" fill="url(#yg)" stroke="#4a4a5a" stroke-width="0.6"/>
<rect x="2.2" y="7" width="2.2" height="0.8" fill="#6a5a20"/><rect x="6" y="15.2" width="1.2" height="0.9" fill="#6a5a20"/>
<path d="M8.6 1.2 Q8.6 0.3 9.6 0.3 L15.6 0.3 Q16.9 0.3 16.9 1.6 L16.9 18.4 L8.6 18.4 Z" fill="#22222a"/>
<rect x="9.6" y="1.3" width="5.8" height="7" rx="0.6" fill="#a8b0b4"/><rect x="10.2" y="2" width="4.6" height="3.2" fill="#c8ced0"/>
<path d="M9.9 10 H15.2 M9.9 11.8 H15.2 M9.9 13.6 H15.2 M12.5 9.2 V14.4" stroke="#44444e" stroke-width="0.6"/>
<rect x="10.6" y="15.9" width="2" height="1.3" fill="#e02020"/>
</svg>
<div class="t" style="left:64.4px;top:439.25px;font-size:10.2px;color:#151515;transform:scaleX(0.9112);transform-origin:0 0;-webkit-text-stroke:0.05px #151515;"><span id="tx31">A160-500-2-274</span></div>
<div class="a" style="left:25.70px;top:459.65px;width:6.8px;height:6.8px;border-radius:50%;background:linear-gradient(#f8f8f8 0,#d4d4d4 35%,#858585 55%,#b8b8b8 75%,#e4e4e4 100%);box-shadow:0 0 0 1px #7a7a7a, 0 0 0 2px rgba(190,180,200,.45)"></div>
<svg style="left:36.5px;top:453.55px" width="18" height="19" viewBox="0 0 18 19">
<defs><linearGradient id="yg" x1="0" y1="0" x2="1" y2="1"><stop offset="0" stop-color="#f4dc3a"/><stop offset="0.6" stop-color="#e8c41c"/><stop offset="1" stop-color="#c8a010"/></linearGradient></defs>
<path d="M0.5 3.4 Q0.5 1.6 2.3 1.5 L8.8 1.3 L8.8 18.2 L0.7 17.6 Z" fill="url(#yg)" stroke="#4a4a5a" stroke-width="0.6"/>
<rect x="2.2" y="7" width="2.2" height="0.8" fill="#6a5a20"/><rect x="6" y="15.2" width="1.2" height="0.9" fill="#6a5a20"/>
<path d="M8.6 1.2 Q8.6 0.3 9.6 0.3 L15.6 0.3 Q16.9 0.3 16.9 1.6 L16.9 18.4 L8.6 18.4 Z" fill="#22222a"/>
<rect x="9.6" y="1.3" width="5.8" height="7" rx="0.6" fill="#a8b0b4"/><rect x="10.2" y="2" width="4.6" height="3.2" fill="#c8ced0"/>
<path d="M9.9 10 H15.2 M9.9 11.8 H15.2 M9.9 13.6 H15.2 M12.5 9.2 V14.4" stroke="#44444e" stroke-width="0.6"/>
<rect x="10.6" y="15.9" width="2" height="1.3" fill="#e02020"/>
</svg>
<div class="t" style="left:64.4px;top:459.70px;font-size:10.2px;color:#151515;transform:scaleX(0.8967);transform-origin:0 0;-webkit-text-stroke:0.05px #151515;"><span id="tx32">TDW 4000-1-35</span></div>
<div class="a" style="left:2.75px;top:476.1px;width:7px;height:7px;background:#111;border-radius:1px"></div>
<div class="a" style="left:4.5px;top:479.1px;width:3.5px;height:1.2px;background:#fff"></div>
<div class="t" style="left:12.75px;top:473.7px;font-size:9.8px;color:#111;transform:scaleX(0.8569);transform-origin:0 0;-webkit-text-stroke:0.1px #111;"><span id="tx33">POJ 1 TEAM2</span></div>
<div class="a" style="left:0;top:484px;width:167px;height:7.5px;overflow:hidden"><svg style="left:36.5px;top:1.00px" width="18" height="19" viewBox="0 0 18 19">
<defs><linearGradient id="yg" x1="0" y1="0" x2="1" y2="1"><stop offset="0" stop-color="#f4dc3a"/><stop offset="0.6" stop-color="#e8c41c"/><stop offset="1" stop-color="#c8a010"/></linearGradient></defs>
<path d="M0.5 3.4 Q0.5 1.6 2.3 1.5 L8.8 1.3 L8.8 18.2 L0.7 17.6 Z" fill="url(#yg)" stroke="#4a4a5a" stroke-width="0.6"/>
<rect x="2.2" y="7" width="2.2" height="0.8" fill="#6a5a20"/><rect x="6" y="15.2" width="1.2" height="0.9" fill="#6a5a20"/>
<path d="M8.6 1.2 Q8.6 0.3 9.6 0.3 L15.6 0.3 Q16.9 0.3 16.9 1.6 L16.9 18.4 L8.6 18.4 Z" fill="#22222a"/>
<rect x="9.6" y="1.3" width="5.8" height="7" rx="0.6" fill="#a8b0b4"/><rect x="10.2" y="2" width="4.6" height="3.2" fill="#c8ced0"/>
<path d="M9.9 10 H15.2 M9.9 11.8 H15.2 M9.9 13.6 H15.2 M12.5 9.2 V14.4" stroke="#44444e" stroke-width="0.6"/>
<rect x="10.6" y="15.9" width="2" height="1.3" fill="#e02020"/>
</svg></div>
<div class="a" style="left:187.3px;top:89.7px;width:147.4px;height:84.2px;border:1.8px solid #2a5aa8;border-radius:3px"></div>
<div class="a" style="left:189.6px;top:86.7px;width:38px;height:6px;background:#fff"></div>
<div class="t" style="left:191.6px;top:85.10000000000001px;font-size:8.5px;color:#3c3c3c;letter-spacing:-0.500px;-webkit-text-stroke:0.15px #3c3c3c;"><span id="tx34">预设参数</span></div>
<div class="t" style="left:205px;top:100.8px;font-size:8.4px;color:#333;letter-spacing:0.525px;-webkit-text-stroke:0.2px #333;"><span id="tx35">电流（A)</span></div>
<div class="t" style="left:205px;top:119.8px;font-size:8.4px;color:#333;letter-spacing:0.525px;-webkit-text-stroke:0.2px #333;"><span id="tx36">电压（V)</span></div>
<div class="t" style="left:207.6px;top:139.4px;font-size:8.4px;color:#333;letter-spacing:0.350px;-webkit-text-stroke:0.2px #333;"><span id="tx37">当前通道</span></div>
<div class="t" style="left:207.6px;top:158.8px;font-size:8.4px;color:#333;letter-spacing:0.350px;-webkit-text-stroke:0.2px #333;"><span id="tx38">焊接方式</span></div>
<div class="a" style="left:259.8px;top:97.3px;width:35.2px;height:14.3px;background:#000"></div>
<div class="t" style="left:127.40000000000003px;width:300px;text-align:center;top:100.35000000000001px;font-size:10px;color:#ffff00;font-weight:bold;letter-spacing:0.771px;-webkit-text-stroke:0.2px #ffff00;"><span id="tx39">250</span></div>
<div class="a" style="left:259.8px;top:116.6px;width:35.2px;height:14.3px;background:#000"></div>
<div class="t" style="left:127.40000000000003px;width:300px;text-align:center;top:119.65px;font-size:10px;color:#ffff00;font-weight:bold;letter-spacing:0.533px;-webkit-text-stroke:0.2px #ffff00;"><span id="tx40">30.0</span></div>
<div class="a" style="left:259.8px;top:135.7px;width:35.2px;height:14.3px;background:#000"></div>
<div class="a" style="left:259.8px;top:154.3px;width:58.2px;height:14.6px;background:#000"></div>
<div class="t" style="left:261.3px;top:156.4px;font-size:10.8px;color:#ffff00;font-weight:bold;letter-spacing:-0.200px;"><span id="tx41">脉冲气保焊</span></div>
<div class="a" style="left:341.5px;top:89.9px;width:147px;height:83.8px;border:1.8px solid #2a5aa8;border-radius:3px"></div>
<div class="a" style="left:343.3px;top:86.9px;width:38.7px;height:6px;background:#fff"></div>
<div class="t" style="left:345.3px;top:85.30000000000001px;font-size:8.5px;color:#3c3c3c;letter-spacing:-0.325px;-webkit-text-stroke:0.15px #3c3c3c;"><span id="tx42">实时参数</span></div>
<div class="t" style="left:130px;width:300px;text-align:right;top:100.8px;font-size:8.4px;color:#333;letter-spacing:0.525px;-webkit-text-stroke:0.2px #333;"><span id="tx43">电流（A)</span></div>
<div class="t" style="left:130px;width:300px;text-align:right;top:119.8px;font-size:8.4px;color:#333;letter-spacing:0.525px;-webkit-text-stroke:0.2px #333;"><span id="tx44">电压（V)</span></div>
<div class="t" style="left:130px;width:300px;text-align:right;top:139.4px;font-size:8.4px;color:#333;letter-spacing:0.519px;-webkit-text-stroke:0.2px #333;"><span id="tx45">送丝速度（m/min)</span></div>
<div class="a" style="left:442.6px;top:98px;width:35.4px;height:13.6px;background:#000"></div>
<div class="t" style="left:310.3px;width:300px;text-align:center;top:100.7px;font-size:10px;color:#ffff00;font-weight:bold;-webkit-text-stroke:0.2px #ffff00;"><span id="tx46">0</span></div>
<div class="a" style="left:442.6px;top:116.5px;width:35.4px;height:14.1px;background:#000"></div>
<div class="t" style="left:310.3px;width:300px;text-align:center;top:119.45px;font-size:10px;color:#ffff00;font-weight:bold;letter-spacing:0.531px;-webkit-text-stroke:0.2px #ffff00;"><span id="tx47">0.0</span></div>
<div class="a" style="left:442.6px;top:135.7px;width:35.4px;height:14px;background:#000"></div>
<div class="t" style="left:310.3px;width:300px;text-align:center;top:138.6px;font-size:10px;color:#ffff00;font-weight:bold;letter-spacing:0.531px;-webkit-text-stroke:0.2px #ffff00;"><span id="tx48">5.9</span></div>
<div class="a" style="left:498px;top:97px;width:295.5px;height:173.5px;background:#303030;border-radius:5px;border-left:1px solid #5a5a5a"></div>
<div class="t" style="left:489.5px;width:300px;text-align:center;top:107px;font-size:8.2px;color:#e6e6e6;letter-spacing:0.143px;-webkit-text-stroke:0.15px #e6e6e6;"><span id="tx49">电压电流监控图</span></div>
<div class="a" style="left:526px;top:118px;width:239px;height:116.5px;border:1px solid #c4c4c4;border-bottom:none"></div>
<svg style="left:0;top:0" width="800" height="510"><line x1="527" y1="210.00" x2="764" y2="210.00" stroke="#5a8a2a" stroke-width="1"/><line x1="527" y1="186.40" x2="764" y2="186.40" stroke="#5a8a2a" stroke-width="1"/><line x1="527" y1="162.80" x2="764" y2="162.80" stroke="#5a8a2a" stroke-width="1"/><line x1="527" y1="139.20" x2="764" y2="139.20" stroke="#5a8a2a" stroke-width="1"/><line x1="639.6" y1="119" x2="639.6" y2="234" stroke="#6c9a30" stroke-width="1"/><line x1="527" y1="233.8" x2="537" y2="233.8" stroke="#4a7a2a" stroke-width="1.2"/><line x1="537" y1="184.5" x2="754" y2="184.5" stroke="#a020d0" stroke-width="1.5" stroke-dasharray="3 1.7"/><line x1="537" y1="198.3" x2="754" y2="198.3" stroke="#d89a28" stroke-width="1.4" stroke-dasharray="3 1.7"/><line x1="537" y1="233.7" x2="754" y2="233.7" stroke="#f0a030" stroke-width="1.6"/><line x1="526.5" y1="118" x2="526.5" y2="238" stroke="#d0d0d0" stroke-width="1.2"/><line x1="521" y1="233.60" x2="526" y2="233.60" stroke="#c8c8c8" stroke-width="0.8"/><line x1="524.4" y1="231.64" x2="526" y2="231.64" stroke="#c8c8c8" stroke-width="0.8"/><line x1="524.4" y1="229.68" x2="526" y2="229.68" stroke="#c8c8c8" stroke-width="0.8"/><line x1="524.4" y1="227.72" x2="526" y2="227.72" stroke="#c8c8c8" stroke-width="0.8"/><line x1="524.4" y1="225.76" x2="526" y2="225.76" stroke="#c8c8c8" stroke-width="0.8"/><line x1="523.5" y1="223.80" x2="526" y2="223.80" stroke="#c8c8c8" stroke-width="0.8"/><line x1="524.4" y1="221.84" x2="526" y2="221.84" stroke="#c8c8c8" stroke-width="0.8"/><line x1="524.4" y1="219.88" x2="526" y2="219.88" stroke="#c8c8c8" stroke-width="0.8"/><line x1="524.4" y1="217.92" x2="526" y2="217.92" stroke="#c8c8c8" stroke-width="0.8"/><line x1="524.4" y1="215.96" x2="526" y2="215.96" stroke="#c8c8c8" stroke-width="0.8"/><line x1="521" y1="214.00" x2="526" y2="214.00" stroke="#c8c8c8" stroke-width="0.8"/><line x1="524.4" y1="212.04" x2="526" y2="212.04" stroke="#c8c8c8" stroke-width="0.8"/><line x1="524.4" y1="210.08" x2="526" y2="210.08" stroke="#c8c8c8" stroke-width="0.8"/><line x1="524.4" y1="208.12" x2="526" y2="208.12" stroke="#c8c8c8" stroke-width="0.8"/><line x1="524.4" y1="206.16" x2="526" y2="206.16" stroke="#c8c8c8" stroke-width="0.8"/><line x1="523.5" y1="204.20" x2="526" y2="204.20" stroke="#c8c8c8" stroke-width="0.8"/><line x1="524.4" y1="202.24" x2="526" y2="202.24" stroke="#c8c8c8" stroke-width="0.8"/><line x1="524.4" y1="200.28" x2="526" y2="200.28" stroke="#c8c8c8" stroke-width="0.8"/><line x1="524.4" y1="198.32" x2="526" y2="198.32" stroke="#c8c8c8" stroke-width="0.8"/><line x1="524.4" y1="196.36" x2="526" y2="196.36" stroke="#c8c8c8" stroke-width="0.8"/><line x1="521" y1="194.40" x2="526" y2="194.40" stroke="#c8c8c8" stroke-width="0.8"/><line x1="524.4" y1="192.44" x2="526" y2="192.44" stroke="#c8c8c8" stroke-width="0.8"/><line x1="524.4" y1="190.48" x2="526" y2="190.48" stroke="#c8c8c8" stroke-width="0.8"/><line x1="524.4" y1="188.52" x2="526" y2="188.52" stroke="#c8c8c8" stroke-width="0.8"/><line x1="524.4" y1="186.56" x2="526" y2="186.56" stroke="#c8c8c8" stroke-width="0.8"/><line x1="523.5" y1="184.60" x2="526" y2="184.60" stroke="#c8c8c8" stroke-width="0.8"/><line x1="524.4" y1="182.64" x2="526" y2="182.64" stroke="#c8c8c8" stroke-width="0.8"/><line x1="524.4" y1="180.68" x2="526" y2="180.68" stroke="#c8c8c8" stroke-width="0.8"/><line x1="524.4" y1="178.72" x2="526" y2="178.72" stroke="#c8c8c8" stroke-width="0.8"/><line x1="524.4" y1="176.76" x2="526" y2="176.76" stroke="#c8c8c8" stroke-width="0.8"/><line x1="521" y1="174.80" x2="526" y2="174.80" stroke="#c8c8c8" stroke-width="0.8"/><line x1="524.4" y1="172.84" x2="526" y2="172.84" stroke="#c8c8c8" stroke-width="0.8"/><line x1="524.4" y1="170.88" x2="526" y2="170.88" stroke="#c8c8c8" stroke-width="0.8"/><line x1="524.4" y1="168.92" x2="526" y2="168.92" stroke="#c8c8c8" stroke-width="0.8"/><line x1="524.4" y1="166.96" x2="526" y2="166.96" stroke="#c8c8c8" stroke-width="0.8"/><line x1="523.5" y1="165.00" x2="526" y2="165.00" stroke="#c8c8c8" stroke-width="0.8"/><line x1="524.4" y1="163.04" x2="526" y2="163.04" stroke="#c8c8c8" stroke-width="0.8"/><line x1="524.4" y1="161.08" x2="526" y2="161.08" stroke="#c8c8c8" stroke-width="0.8"/><line x1="524.4" y1="159.12" x2="526" y2="159.12" stroke="#c8c8c8" stroke-width="0.8"/><line x1="524.4" y1="157.16" x2="526" y2="157.16" stroke="#c8c8c8" stroke-width="0.8"/><line x1="521" y1="155.20" x2="526" y2="155.20" stroke="#c8c8c8" stroke-width="0.8"/><line x1="524.4" y1="153.24" x2="526" y2="153.24" stroke="#c8c8c8" stroke-width="0.8"/><line x1="524.4" y1="151.28" x2="526" y2="151.28" stroke="#c8c8c8" stroke-width="0.8"/><line x1="524.4" y1="149.32" x2="526" y2="149.32" stroke="#c8c8c8" stroke-width="0.8"/><line x1="524.4" y1="147.36" x2="526" y2="147.36" stroke="#c8c8c8" stroke-width="0.8"/><line x1="523.5" y1="145.40" x2="526" y2="145.40" stroke="#c8c8c8" stroke-width="0.8"/><line x1="524.4" y1="143.44" x2="526" y2="143.44" stroke="#c8c8c8" stroke-width="0.8"/><line x1="524.4" y1="141.48" x2="526" y2="141.48" stroke="#c8c8c8" stroke-width="0.8"/><line x1="524.4" y1="139.52" x2="526" y2="139.52" stroke="#c8c8c8" stroke-width="0.8"/><line x1="524.4" y1="137.56" x2="526" y2="137.56" stroke="#c8c8c8" stroke-width="0.8"/><line x1="521" y1="135.60" x2="526" y2="135.60" stroke="#c8c8c8" stroke-width="0.8"/><line x1="524.4" y1="133.64" x2="526" y2="133.64" stroke="#c8c8c8" stroke-width="0.8"/><line x1="524.4" y1="131.68" x2="526" y2="131.68" stroke="#c8c8c8" stroke-width="0.8"/><line x1="524.4" y1="129.72" x2="526" y2="129.72" stroke="#c8c8c8" stroke-width="0.8"/><line x1="524.4" y1="127.76" x2="526" y2="127.76" stroke="#c8c8c8" stroke-width="0.8"/><line x1="523.5" y1="125.80" x2="526" y2="125.80" stroke="#c8c8c8" stroke-width="0.8"/><line x1="524.4" y1="123.84" x2="526" y2="123.84" stroke="#c8c8c8" stroke-width="0.8"/><line x1="524.4" y1="121.88" x2="526" y2="121.88" stroke="#c8c8c8" stroke-width="0.8"/><line x1="524.4" y1="119.92" x2="526" y2="119.92" stroke="#c8c8c8" stroke-width="0.8"/><line x1="764.5" y1="118" x2="764.5" y2="235" stroke="#d0d0d0" stroke-width="1.2"/><line x1="765" y1="233.60" x2="770" y2="233.60" stroke="#c8c8c8" stroke-width="0.8"/><line x1="765" y1="230.65" x2="766.8" y2="230.65" stroke="#c8c8c8" stroke-width="0.8"/><line x1="765" y1="227.70" x2="766.8" y2="227.70" stroke="#c8c8c8" stroke-width="0.8"/><line x1="765" y1="224.75" x2="766.8" y2="224.75" stroke="#c8c8c8" stroke-width="0.8"/><line x1="765" y1="221.80" x2="767.8" y2="221.80" stroke="#c8c8c8" stroke-width="0.8"/><line x1="765" y1="218.85" x2="766.8" y2="218.85" stroke="#c8c8c8" stroke-width="0.8"/><line x1="765" y1="215.90" x2="766.8" y2="215.90" stroke="#c8c8c8" stroke-width="0.8"/><line x1="765" y1="212.95" x2="766.8" y2="212.95" stroke="#c8c8c8" stroke-width="0.8"/><line x1="765" y1="210.00" x2="770" y2="210.00" stroke="#c8c8c8" stroke-width="0.8"/><line x1="765" y1="207.05" x2="766.8" y2="207.05" stroke="#c8c8c8" stroke-width="0.8"/><line x1="765" y1="204.10" x2="766.8" y2="204.10" stroke="#c8c8c8" stroke-width="0.8"/><line x1="765" y1="201.15" x2="766.8" y2="201.15" stroke="#c8c8c8" stroke-width="0.8"/><line x1="765" y1="198.20" x2="767.8" y2="198.20" stroke="#c8c8c8" stroke-width="0.8"/><line x1="765" y1="195.25" x2="766.8" y2="195.25" stroke="#c8c8c8" stroke-width="0.8"/><line x1="765" y1="192.30" x2="766.8" y2="192.30" stroke="#c8c8c8" stroke-width="0.8"/><line x1="765" y1="189.35" x2="766.8" y2="189.35" stroke="#c8c8c8" stroke-width="0.8"/><line x1="765" y1="186.40" x2="770" y2="186.40" stroke="#c8c8c8" stroke-width="0.8"/><line x1="765" y1="183.45" x2="766.8" y2="183.45" stroke="#c8c8c8" stroke-width="0.8"/><line x1="765" y1="180.50" x2="766.8" y2="180.50" stroke="#c8c8c8" stroke-width="0.8"/><line x1="765" y1="177.55" x2="766.8" y2="177.55" stroke="#c8c8c8" stroke-width="0.8"/><line x1="765" y1="174.60" x2="767.8" y2="174.60" stroke="#c8c8c8" stroke-width="0.8"/><line x1="765" y1="171.65" x2="766.8" y2="171.65" stroke="#c8c8c8" stroke-width="0.8"/><line x1="765" y1="168.70" x2="766.8" y2="168.70" stroke="#c8c8c8" stroke-width="0.8"/><line x1="765" y1="165.75" x2="766.8" y2="165.75" stroke="#c8c8c8" stroke-width="0.8"/><line x1="765" y1="162.80" x2="770" y2="162.80" stroke="#c8c8c8" stroke-width="0.8"/><line x1="765" y1="159.85" x2="766.8" y2="159.85" stroke="#c8c8c8" stroke-width="0.8"/><line x1="765" y1="156.90" x2="766.8" y2="156.90" stroke="#c8c8c8" stroke-width="0.8"/><line x1="765" y1="153.95" x2="766.8" y2="153.95" stroke="#c8c8c8" stroke-width="0.8"/><line x1="765" y1="151.00" x2="767.8" y2="151.00" stroke="#c8c8c8" stroke-width="0.8"/><line x1="765" y1="148.05" x2="766.8" y2="148.05" stroke="#c8c8c8" stroke-width="0.8"/><line x1="765" y1="145.10" x2="766.8" y2="145.10" stroke="#c8c8c8" stroke-width="0.8"/><line x1="765" y1="142.15" x2="766.8" y2="142.15" stroke="#c8c8c8" stroke-width="0.8"/><line x1="765" y1="139.20" x2="770" y2="139.20" stroke="#c8c8c8" stroke-width="0.8"/><line x1="765" y1="136.25" x2="766.8" y2="136.25" stroke="#c8c8c8" stroke-width="0.8"/><line x1="765" y1="133.30" x2="766.8" y2="133.30" stroke="#c8c8c8" stroke-width="0.8"/><line x1="765" y1="130.35" x2="766.8" y2="130.35" stroke="#c8c8c8" stroke-width="0.8"/><line x1="765" y1="127.40" x2="767.8" y2="127.40" stroke="#c8c8c8" stroke-width="0.8"/><line x1="765" y1="124.45" x2="766.8" y2="124.45" stroke="#c8c8c8" stroke-width="0.8"/><line x1="765" y1="121.50" x2="766.8" y2="121.50" stroke="#c8c8c8" stroke-width="0.8"/><line x1="526" y1="235" x2="765" y2="235" stroke="#d8d8d8" stroke-width="1"/><line x1="527.20" y1="235" x2="527.20" y2="238.8" stroke="#c8c8c8" stroke-width="0.9"/><line x1="529.45" y1="235" x2="529.45" y2="238.8" stroke="#c8c8c8" stroke-width="0.9"/><line x1="531.70" y1="235" x2="531.70" y2="238.8" stroke="#c8c8c8" stroke-width="0.9"/><line x1="533.95" y1="235" x2="533.95" y2="238.8" stroke="#c8c8c8" stroke-width="0.9"/><line x1="536.20" y1="235" x2="536.20" y2="238.8" stroke="#c8c8c8" stroke-width="0.9"/><line x1="538.45" y1="235" x2="538.45" y2="238.8" stroke="#c8c8c8" stroke-width="0.9"/><line x1="540.70" y1="235" x2="540.70" y2="238.8" stroke="#c8c8c8" stroke-width="0.9"/><line x1="542.95" y1="235" x2="542.95" y2="238.8" stroke="#c8c8c8" stroke-width="0.9"/><line x1="545.20" y1="235" x2="545.20" y2="238.8" stroke="#c8c8c8" stroke-width="0.9"/><line x1="547.45" y1="235" x2="547.45" y2="238.8" stroke="#c8c8c8" stroke-width="0.9"/><line x1="549.70" y1="235" x2="549.70" y2="238.8" stroke="#c8c8c8" stroke-width="0.9"/><line x1="551.95" y1="235" x2="551.95" y2="238.8" stroke="#c8c8c8" stroke-width="0.9"/><line x1="554.20" y1="235" x2="554.20" y2="238.8" stroke="#c8c8c8" stroke-width="0.9"/><line x1="556.45" y1="235" x2="556.45" y2="238.8" stroke="#c8c8c8" stroke-width="0.9"/><line x1="558.70" y1="235" x2="558.70" y2="238.8" stroke="#c8c8c8" stroke-width="0.9"/><line x1="560.95" y1="235" x2="560.95" y2="238.8" stroke="#c8c8c8" stroke-width="0.9"/><line x1="563.20" y1="235" x2="563.20" y2="238.8" stroke="#c8c8c8" stroke-width="0.9"/><line x1="565.45" y1="235" x2="565.45" y2="238.8" stroke="#c8c8c8" stroke-width="0.9"/><line x1="567.70" y1="235" x2="567.70" y2="238.8" stroke="#c8c8c8" stroke-width="0.9"/><line x1="569.95" y1="235" x2="569.95" y2="238.8" stroke="#c8c8c8" stroke-width="0.9"/><line x1="572.20" y1="235" x2="572.20" y2="238.8" stroke="#c8c8c8" stroke-width="0.9"/><line x1="574.45" y1="235" x2="574.45" y2="238.8" stroke="#c8c8c8" stroke-width="0.9"/><line x1="576.70" y1="235" x2="576.70" y2="238.8" stroke="#c8c8c8" stroke-width="0.9"/><line x1="578.95" y1="235" x2="578.95" y2="238.8" stroke="#c8c8c8" stroke-width="0.9"/><line x1="581.20" y1="235" x2="581.20" y2="238.8" stroke="#c8c8c8" stroke-width="0.9"/><line x1="583.45" y1="235" x2="583.45" y2="238.8" stroke="#c8c8c8" stroke-width="0.9"/><line x1="585.70" y1="235" x2="585.70" y2="238.8" stroke="#c8c8c8" stroke-width="0.9"/><line x1="587.95" y1="235" x2="587.95" y2="238.8" stroke="#c8c8c8" stroke-width="0.9"/><line x1="590.20" y1="235" x2="590.20" y2="238.8" stroke="#c8c8c8" stroke-width="0.9"/><line x1="592.45" y1="235" x2="592.45" y2="238.8" stroke="#c8c8c8" stroke-width="0.9"/><line x1="594.70" y1="235" x2="594.70" y2="238.8" stroke="#c8c8c8" stroke-width="0.9"/><line x1="596.95" y1="235" x2="596.95" y2="238.8" stroke="#c8c8c8" stroke-width="0.9"/><line x1="599.20" y1="235" x2="599.20" y2="238.8" stroke="#c8c8c8" stroke-width="0.9"/><line x1="601.45" y1="235" x2="601.45" y2="238.8" stroke="#c8c8c8" stroke-width="0.9"/><line x1="603.70" y1="235" x2="603.70" y2="238.8" stroke="#c8c8c8" stroke-width="0.9"/><line x1="605.95" y1="235" x2="605.95" y2="238.8" stroke="#c8c8c8" stroke-width="0.9"/><line x1="608.20" y1="235" x2="608.20" y2="238.8" stroke="#c8c8c8" stroke-width="0.9"/><line x1="610.45" y1="235" x2="610.45" y2="238.8" stroke="#c8c8c8" stroke-width="0.9"/><line x1="612.70" y1="235" x2="612.70" y2="238.8" stroke="#c8c8c8" stroke-width="0.9"/><line x1="614.95" y1="235" x2="614.95" y2="238.8" stroke="#c8c8c8" stroke-width="0.9"/><line x1="617.20" y1="235" x2="617.20" y2="238.8" stroke="#c8c8c8" stroke-width="0.9"/><line x1="619.45" y1="235" x2="619.45" y2="238.8" stroke="#c8c8c8" stroke-width="0.9"/><line x1="621.70" y1="235" x2="621.70" y2="238.8" stroke="#c8c8c8" stroke-width="0.9"/><line x1="623.95" y1="235" x2="623.95" y2="238.8" stroke="#c8c8c8" stroke-width="0.9"/><line x1="626.20" y1="235" x2="626.20" y2="238.8" stroke="#c8c8c8" stroke-width="0.9"/><line x1="628.45" y1="235" x2="628.45" y2="238.8" stroke="#c8c8c8" stroke-width="0.9"/><line x1="630.70" y1="235" x2="630.70" y2="238.8" stroke="#c8c8c8" stroke-width="0.9"/><line x1="632.95" y1="235" x2="632.95" y2="238.8" stroke="#c8c8c8" stroke-width="0.9"/><line x1="635.20" y1="235" x2="635.20" y2="238.8" stroke="#c8c8c8" stroke-width="0.9"/><line x1="637.45" y1="235" x2="637.45" y2="238.8" stroke="#c8c8c8" stroke-width="0.9"/><line x1="639.70" y1="235" x2="639.70" y2="238.8" stroke="#c8c8c8" stroke-width="0.9"/><line x1="641.95" y1="235" x2="641.95" y2="238.8" stroke="#c8c8c8" stroke-width="0.9"/><line x1="644.20" y1="235" x2="644.20" y2="238.8" stroke="#c8c8c8" stroke-width="0.9"/><line x1="646.45" y1="235" x2="646.45" y2="238.8" stroke="#c8c8c8" stroke-width="0.9"/><line x1="648.70" y1="235" x2="648.70" y2="238.8" stroke="#c8c8c8" stroke-width="0.9"/><line x1="650.95" y1="235" x2="650.95" y2="238.8" stroke="#c8c8c8" stroke-width="0.9"/><line x1="653.20" y1="235" x2="653.20" y2="238.8" stroke="#c8c8c8" stroke-width="0.9"/><line x1="655.45" y1="235" x2="655.45" y2="238.8" stroke="#c8c8c8" stroke-width="0.9"/><line x1="657.70" y1="235" x2="657.70" y2="238.8" stroke="#c8c8c8" stroke-width="0.9"/><line x1="659.95" y1="235" x2="659.95" y2="238.8" stroke="#c8c8c8" stroke-width="0.9"/><line x1="662.20" y1="235" x2="662.20" y2="238.8" stroke="#c8c8c8" stroke-width="0.9"/><line x1="664.45" y1="235" x2="664.45" y2="238.8" stroke="#c8c8c8" stroke-width="0.9"/><line x1="666.70" y1="235" x2="666.70" y2="238.8" stroke="#c8c8c8" stroke-width="0.9"/><line x1="668.95" y1="235" x2="668.95" y2="238.8" stroke="#c8c8c8" stroke-width="0.9"/><line x1="671.20" y1="235" x2="671.20" y2="238.8" stroke="#c8c8c8" stroke-width="0.9"/><line x1="673.45" y1="235" x2="673.45" y2="238.8" stroke="#c8c8c8" stroke-width="0.9"/><line x1="675.70" y1="235" x2="675.70" y2="238.8" stroke="#c8c8c8" stroke-width="0.9"/><line x1="677.95" y1="235" x2="677.95" y2="238.8" stroke="#c8c8c8" stroke-width="0.9"/><line x1="680.20" y1="235" x2="680.20" y2="238.8" stroke="#c8c8c8" stroke-width="0.9"/><line x1="682.45" y1="235" x2="682.45" y2="238.8" stroke="#c8c8c8" stroke-width="0.9"/><line x1="684.70" y1="235" x2="684.70" y2="238.8" stroke="#c8c8c8" stroke-width="0.9"/><line x1="686.95" y1="235" x2="686.95" y2="238.8" stroke="#c8c8c8" stroke-width="0.9"/><line x1="689.20" y1="235" x2="689.20" y2="238.8" stroke="#c8c8c8" stroke-width="0.9"/><line x1="691.45" y1="235" x2="691.45" y2="238.8" stroke="#c8c8c8" stroke-width="0.9"/><line x1="693.70" y1="235" x2="693.70" y2="238.8" stroke="#c8c8c8" stroke-width="0.9"/><line x1="695.95" y1="235" x2="695.95" y2="238.8" stroke="#c8c8c8" stroke-width="0.9"/><line x1="698.20" y1="235" x2="698.20" y2="238.8" stroke="#c8c8c8" stroke-width="0.9"/><line x1="700.45" y1="235" x2="700.45" y2="238.8" stroke="#c8c8c8" stroke-width="0.9"/><line x1="702.70" y1="235" x2="702.70" y2="238.8" stroke="#c8c8c8" stroke-width="0.9"/><line x1="704.95" y1="235" x2="704.95" y2="238.8" stroke="#c8c8c8" stroke-width="0.9"/><line x1="707.20" y1="235" x2="707.20" y2="238.8" stroke="#c8c8c8" stroke-width="0.9"/><line x1="709.45" y1="235" x2="709.45" y2="238.8" stroke="#c8c8c8" stroke-width="0.9"/><line x1="711.70" y1="235" x2="711.70" y2="238.8" stroke="#c8c8c8" stroke-width="0.9"/><line x1="713.95" y1="235" x2="713.95" y2="238.8" stroke="#c8c8c8" stroke-width="0.9"/><line x1="716.20" y1="235" x2="716.20" y2="238.8" stroke="#c8c8c8" stroke-width="0.9"/><line x1="718.45" y1="235" x2="718.45" y2="238.8" stroke="#c8c8c8" stroke-width="0.9"/><line x1="720.70" y1="235" x2="720.70" y2="238.8" stroke="#c8c8c8" stroke-width="0.9"/><line x1="722.95" y1="235" x2="722.95" y2="238.8" stroke="#c8c8c8" stroke-width="0.9"/><line x1="725.20" y1="235" x2="725.20" y2="238.8" stroke="#c8c8c8" stroke-width="0.9"/><line x1="727.45" y1="235" x2="727.45" y2="238.8" stroke="#c8c8c8" stroke-width="0.9"/><line x1="729.70" y1="235" x2="729.70" y2="238.8" stroke="#c8c8c8" stroke-width="0.9"/><line x1="731.95" y1="235" x2="731.95" y2="238.8" stroke="#c8c8c8" stroke-width="0.9"/><line x1="734.20" y1="235" x2="734.20" y2="238.8" stroke="#c8c8c8" stroke-width="0.9"/><line x1="736.45" y1="235" x2="736.45" y2="238.8" stroke="#c8c8c8" stroke-width="0.9"/><line x1="738.70" y1="235" x2="738.70" y2="238.8" stroke="#c8c8c8" stroke-width="0.9"/><line x1="740.95" y1="235" x2="740.95" y2="238.8" stroke="#c8c8c8" stroke-width="0.9"/><line x1="743.20" y1="235" x2="743.20" y2="238.8" stroke="#c8c8c8" stroke-width="0.9"/><line x1="745.45" y1="235" x2="745.45" y2="238.8" stroke="#c8c8c8" stroke-width="0.9"/><line x1="747.70" y1="235" x2="747.70" y2="238.8" stroke="#c8c8c8" stroke-width="0.9"/><line x1="749.95" y1="235" x2="749.95" y2="238.8" stroke="#c8c8c8" stroke-width="0.9"/><line x1="752.20" y1="235" x2="752.20" y2="238.8" stroke="#c8c8c8" stroke-width="0.9"/><line x1="754.45" y1="235" x2="754.45" y2="238.8" stroke="#c8c8c8" stroke-width="0.9"/><line x1="756.70" y1="235" x2="756.70" y2="238.8" stroke="#c8c8c8" stroke-width="0.9"/><line x1="758.95" y1="235" x2="758.95" y2="238.8" stroke="#c8c8c8" stroke-width="0.9"/><line x1="761.20" y1="235" x2="761.20" y2="238.8" stroke="#c8c8c8" stroke-width="0.9"/><line x1="763.45" y1="235" x2="763.45" y2="238.8" stroke="#c8c8c8" stroke-width="0.9"/><line x1="639.6" y1="235" x2="639.6" y2="240.5" stroke="#e0e0e0" stroke-width="1"/></svg>
<div class="t" style="left:220.5px;width:300px;text-align:right;top:229.90px;font-size:6.6px;color:#ececec;-webkit-text-stroke:0.1px #ececec;"><span id="tx50">0</span></div>
<div class="t" style="left:220.5px;width:300px;text-align:right;top:210.30px;font-size:6.6px;color:#ececec;-webkit-text-stroke:0.1px #ececec;"><span id="tx51">100</span></div>
<div class="t" style="left:220.5px;width:300px;text-align:right;top:190.70px;font-size:6.6px;color:#ececec;-webkit-text-stroke:0.1px #ececec;"><span id="tx52">200</span></div>
<div class="t" style="left:220.5px;width:300px;text-align:right;top:171.10px;font-size:6.6px;color:#ececec;-webkit-text-stroke:0.1px #ececec;"><span id="tx53">300</span></div>
<div class="t" style="left:220.5px;width:300px;text-align:right;top:151.50px;font-size:6.6px;color:#ececec;-webkit-text-stroke:0.1px #ececec;"><span id="tx54">400</span></div>
<div class="t" style="left:220.5px;width:300px;text-align:right;top:131.90px;font-size:6.6px;color:#ececec;-webkit-text-stroke:0.1px #ececec;"><span id="tx55">500</span></div>
<div class="t" style="left:770.5px;top:229.90px;font-size:6.8px;color:#ececec;-webkit-text-stroke:0.1px #ececec;"><span id="tx56">0</span></div>
<div class="t" style="left:770.5px;top:206.30px;font-size:6.8px;color:#ececec;-webkit-text-stroke:0.1px #ececec;"><span id="tx57">20</span></div>
<div class="t" style="left:770.5px;top:182.70px;font-size:6.8px;color:#ececec;-webkit-text-stroke:0.1px #ececec;"><span id="tx58">40</span></div>
<div class="t" style="left:770.5px;top:159.10px;font-size:6.8px;color:#ececec;-webkit-text-stroke:0.1px #ececec;"><span id="tx59">60</span></div>
<div class="t" style="left:770.5px;top:135.50px;font-size:6.8px;color:#ececec;-webkit-text-stroke:0.1px #ececec;"><span id="tx60">80</span></div>
<div class="t" style="left:489.4px;width:300px;text-align:center;top:242.2px;font-size:5.2px;color:#e0e0e0;"><span id="tx61">13</span></div>
<div class="t" style="left:588.75px;top:251.8px;font-size:8.5px;color:#f0f0f0;letter-spacing:-0.147px;-webkit-text-stroke:0.1px #f0f0f0;"><span id="tx62">2018-12-11 11:00</span></div>
<div class="t" style="left:504px;top:179.5px;font-size:8px;color:#e8e8e8;-webkit-text-stroke:0.15px #e8e8e8;transform:translate(-50%,-50%) rotate(-90deg)">电流（A)</div>
<div class="t" style="left:788.2px;top:186.3px;font-size:8px;color:#e8e8e8;-webkit-text-stroke:0.15px #e8e8e8;transform:translate(-50%,-50%) rotate(-90deg)">电压（V)</div>
<div class="a" style="left:716px;top:123.6px;width:43.6px;height:37px;border:1px solid #c8c8c8;border-radius:3px"></div>
<svg style="left:719px;top:126.0px" width="12" height="8"><line x1="1" y1="6" x2="10" y2="2.5" stroke="#9a30c8" stroke-width="1.2"/></svg>
<div class="t" style="left:733px;top:127.2px;font-size:5.3px;color:#e8e8e8;"><span id="tx63">预设电流</span></div>
<svg style="left:719px;top:134.2px" width="12" height="8"><line x1="1" y1="6" x2="10" y2="2.5" stroke="#c040f0" stroke-width="1.6"/></svg>
<div class="t" style="left:733px;top:135.4px;font-size:5.3px;color:#e8e8e8;"><span id="tx64">电流（A)</span></div>
<svg style="left:719px;top:142.4px" width="12" height="8"><line x1="1" y1="6" x2="10" y2="2.5" stroke="#c08830" stroke-width="1.2"/></svg>
<div class="t" style="left:733px;top:143.6px;font-size:5.3px;color:#e8e8e8;"><span id="tx65">预设电压</span></div>
<svg style="left:719px;top:150.6px" width="12" height="8"><line x1="1" y1="6" x2="10" y2="2.5" stroke="#f0a020" stroke-width="1.6"/></svg>
<div class="t" style="left:733px;top:151.8px;font-size:5.3px;color:#e8e8e8;"><span id="tx66">电压（V)</span></div>
<div class="a" style="left:187.6px;top:186.1px;width:300.6px;height:89.3px;border:1.8px solid #2a5aa8;border-radius:3px"></div>
<div class="a" style="left:189.6px;top:183.1px;width:37.4px;height:6px;background:#fff"></div>
<div class="t" style="left:191.6px;top:181.5px;font-size:8.5px;color:#3c3c3c;letter-spacing:-0.650px;-webkit-text-stroke:0.15px #3c3c3c;"><span id="tx67">状态信息</span></div>
<div class="a" style="left:190px;top:191.4px;width:80.4px;height:19.6px;background:#c8c8c8"></div>
<div class="t" style="left:193px;top:197.8px;font-size:6.6px;color:#333;letter-spacing:-0.500px;"><span id="tx68">异常</span></div>
<div class="t" style="left:230px;top:197.8px;font-size:6.6px;color:#333;letter-spacing:-0.200px;"><span id="tx69">正常</span></div>
<div class="a" style="left:210.85px;top:193.95px;width:14.7px;height:14.7px;border-radius:50%;background:#d4d4d4;border:1px solid #8c8c8c"></div>
<div class="a" style="left:212.70px;top:195.80px;width:11px;height:11px;border-radius:50%;background:radial-gradient(circle at 50% 30%,#ffd0d0 0,#ff5050 22%,#e01010 55%,#a00000 85%,#700000)"></div>
<div class="a" style="left:254.35px;top:193.95px;width:14.7px;height:14.7px;border-radius:50%;background:#d4d4d4;border:1px solid #8c8c8c"></div>
<div class="a" style="left:256.20px;top:195.80px;width:11px;height:11px;border-radius:50%;background:radial-gradient(circle at 50% 30%,#d8ffd0 0,#60f050 22%,#20c020 55%,#0a8a0a 85%,#066006)"></div>
<div class="t" style="left:291px;top:197.7px;font-size:8.3px;color:#333;letter-spacing:0.250px;-webkit-text-stroke:0.2px #333;"><span id="tx70">面板状态</span></div>
<svg style="left:327.9px;top:192.2px" width="18" height="18" viewBox="0 0 18 18">
<rect x="0.5" y="0.5" width="17" height="17" rx="2" fill="#fff" stroke="#94bce8" stroke-width="1"/>
<path d="M10.5 9 V5.5 A3.2 3.2 0 0 1 16.5 5.5 V7" fill="none" stroke="#8a8a8a" stroke-width="1.3"/>
<rect x="1.4" y="8.2" width="10.5" height="8" fill="#d8d8d8"/>
<rect x="1.4" y="11" width="10.5" height="2.6" fill="#111"/>
<path d="M2.5 13.6 L4 11 L5.2 11 L3.7 13.6Z M6 13.6 L7.5 11 L8.7 11 L7.2 13.6Z M9.4 13.6 L10.9 11 L11.9 11 L11.9 11.4 L10.6 13.6Z" fill="#f0e000"/>
</svg>
<div class="a" style="left:189.7px;top:222.1px;width:296px;height:48.3px;background:#c8c8c8"></div>
<div class="t" style="left:193.3px;top:229.8px;font-size:8px;color:#333;letter-spacing:0.000px;-webkit-text-stroke:0.2px #333;"><span id="tx71">欠压</span></div>
<div class="a" style="left:213.50px;top:226.30px;width:15px;height:15px;border-radius:50%;background:#d4d4d4;border:1px solid #8c8c8c"></div>
<div class="a" style="left:215.25px;top:228.05px;width:11.5px;height:11.5px;border-radius:50%;background:radial-gradient(circle at 50% 30%,#d8ffd0 0,#60f050 22%,#20c020 55%,#0a8a0a 85%,#066006)"></div>
<div class="t" style="left:233px;top:229.8px;font-size:8px;color:#333;letter-spacing:0.000px;-webkit-text-stroke:0.2px #333;"><span id="tx72">过压</span></div>
<div class="a" style="left:254.50px;top:226.30px;width:15px;height:15px;border-radius:50%;background:#d4d4d4;border:1px solid #8c8c8c"></div>
<div class="a" style="left:256.25px;top:228.05px;width:11.5px;height:11.5px;border-radius:50%;background:radial-gradient(circle at 50% 30%,#d8ffd0 0,#60f050 22%,#20c020 55%,#0a8a0a 85%,#066006)"></div>
<div class="t" style="left:274px;top:229.8px;font-size:8px;color:#333;letter-spacing:0.000px;-webkit-text-stroke:0.2px #333;"><span id="tx73">过温</span></div>
<div class="a" style="left:294.80px;top:226.30px;width:15px;height:15px;border-radius:50%;background:#d4d4d4;border:1px solid #8c8c8c"></div>
<div class="a" style="left:296.55px;top:228.05px;width:11.5px;height:11.5px;border-radius:50%;background:radial-gradient(circle at 50% 30%,#d8ffd0 0,#60f050 22%,#20c020 55%,#0a8a0a 85%,#066006)"></div>
<div class="t" style="left:314.4px;top:229.8px;font-size:8px;color:#333;letter-spacing:0.000px;-webkit-text-stroke:0.2px #333;"><span id="tx74">缺相</span></div>
<div class="a" style="left:335.60px;top:226.30px;width:15px;height:15px;border-radius:50%;background:#d4d4d4;border:1px solid #8c8c8c"></div>
<div class="a" style="left:337.35px;top:228.05px;width:11.5px;height:11.5px;border-radius:50%;background:radial-gradient(circle at 50% 30%,#d8ffd0 0,#60f050 22%,#20c020 55%,#0a8a0a 85%,#066006)"></div>
<div class="t" style="left:193.3px;top:254.2px;font-size:8px;color:#333;letter-spacing:0.000px;-webkit-text-stroke:0.2px #333;"><span id="tx75">过流</span></div>
<div class="a" style="left:213.50px;top:250.70px;width:15px;height:15px;border-radius:50%;background:#d4d4d4;border:1px solid #8c8c8c"></div>
<div class="a" style="left:215.25px;top:252.45px;width:11.5px;height:11.5px;border-radius:50%;background:radial-gradient(circle at 50% 30%,#d8ffd0 0,#60f050 22%,#20c020 55%,#0a8a0a 85%,#066006)"></div>
<div class="t" style="left:233px;top:254.2px;font-size:8px;color:#333;letter-spacing:0.000px;-webkit-text-stroke:0.2px #333;"><span id="tx76">气压</span></div>
<div class="a" style="left:254.50px;top:250.70px;width:15px;height:15px;border-radius:50%;background:#d4d4d4;border:1px solid #8c8c8c"></div>
<div class="a" style="left:256.25px;top:252.45px;width:11.5px;height:11.5px;border-radius:50%;background:radial-gradient(circle at 50% 30%,#d8ffd0 0,#60f050 22%,#20c020 55%,#0a8a0a 85%,#066006)"></div>
<div class="t" style="left:274px;top:254.2px;font-size:8px;color:#333;letter-spacing:0.000px;-webkit-text-stroke:0.2px #333;"><span id="tx77">水压</span></div>
<div class="a" style="left:294.80px;top:250.70px;width:15px;height:15px;border-radius:50%;background:#d4d4d4;border:1px solid #8c8c8c"></div>
<div class="a" style="left:296.55px;top:252.45px;width:11.5px;height:11.5px;border-radius:50%;background:radial-gradient(circle at 50% 30%,#d8ffd0 0,#60f050 22%,#20c020 55%,#0a8a0a 85%,#066006)"></div>
<div class="a" style="left:185.8px;top:289.5px;width:605px;height:200.9px;border:2px solid #2a5aa8;border-radius:3px"></div>
<div class="a" style="left:189px;top:286.5px;width:36px;height:6px;background:#fff"></div>
<div class="t" style="left:191px;top:285.5px;font-size:8.2px;color:#3c3c3c;letter-spacing:0.000px;-webkit-text-stroke:0.15px #3c3c3c;"><span id="tx78">详细参数</span></div>
<div class="a" style="left:189.8px;top:297.4px;width:586.5px;height:20.6px;border:1px solid #6a8abd;box-shadow:inset 1px 1px 0 #d3deec, inset -1px -1px 0 #e4ebf5"></div>
<div class="a" style="left:189.8px;top:318px;width:586.5px;height:2.3px;background:#d3deec"></div>
<div class="t" style="left:192.7px;top:303.9px;font-size:8.4px;color:#3434a8;letter-spacing:0.375px;-webkit-text-stroke:0.15px #3434a8;"><span id="tx79">操作方式</span></div>
<div class="t" style="left:275px;top:303.9px;font-size:8.4px;color:#3434a8;letter-spacing:0.650px;-webkit-text-stroke:0.15px #3434a8;"><span id="tx80">脉冲方式</span></div>
<div class="t" style="left:358px;top:303.9px;font-size:8.4px;color:#3434a8;letter-spacing:0.250px;-webkit-text-stroke:0.15px #3434a8;"><span id="tx81">焊丝类型</span></div>
<div class="t" style="left:441px;top:303.9px;font-size:8.4px;color:#3434a8;letter-spacing:0.500px;-webkit-text-stroke:0.15px #3434a8;"><span id="tx82">丝径类型</span></div>
<div class="t" style="left:527px;top:303.9px;font-size:8.4px;color:#3434a8;letter-spacing:0.500px;-webkit-text-stroke:0.15px #3434a8;"><span id="tx83">气体类型</span></div>
<div class="a" style="left:226.3px;top:300.8px;width:47.099999999999966px;height:13.4px;border:1px solid #9c9c9c;border-radius:3px;background:#fff;box-shadow:0 1px 0 #c8c8c8"></div>
<div class="a" style="left:261.9px;top:301.6px;width:10.8px;height:11.8px;border-left:1px solid #c4c4c4;border-radius:0 2px 2px 0;background:linear-gradient(#f4f4f4,#d8d8d8)"></div>
<svg style="left:265.6px;top:306px" width="4" height="3"><path d="M0 0 H3.6 L1.8 2.4Z" fill="#111"/></svg>
<div class="t" style="left:229.20000000000002px;top:304.0px;font-size:7.8px;color:#333;letter-spacing:-0.850px;"><span id="tx84">四步</span></div>
<div class="a" style="left:309px;top:300.8px;width:46.60000000000002px;height:13.4px;border:1px solid #9c9c9c;border-radius:3px;background:#fff;box-shadow:0 1px 0 #c8c8c8"></div>
<div class="a" style="left:344.1px;top:301.6px;width:10.8px;height:11.8px;border-left:1px solid #c4c4c4;border-radius:0 2px 2px 0;background:linear-gradient(#f4f4f4,#d8d8d8)"></div>
<svg style="left:347.8px;top:306px" width="4" height="3"><path d="M0 0 H3.6 L1.8 2.4Z" fill="#111"/></svg>
<div class="t" style="left:311.9px;top:304.0px;font-size:7.8px;color:#333;letter-spacing:-0.667px;"><span id="tx85">双脉冲</span></div>
<div class="a" style="left:392.4px;top:300.8px;width:46.200000000000045px;height:13.4px;border:1px solid #9c9c9c;border-radius:3px;background:#fff;box-shadow:0 1px 0 #c8c8c8"></div>
<div class="a" style="left:427.1px;top:301.6px;width:10.8px;height:11.8px;border-left:1px solid #c4c4c4;border-radius:0 2px 2px 0;background:linear-gradient(#f4f4f4,#d8d8d8)"></div>
<svg style="left:430.8px;top:306px" width="4" height="3"><path d="M0 0 H3.6 L1.8 2.4Z" fill="#111"/></svg>
<div class="a" style="left:475px;top:300.8px;width:45px;height:13.4px;border:1px solid #9c9c9c;border-radius:3px;background:#fff;box-shadow:0 1px 0 #c8c8c8"></div>
<div class="a" style="left:508.5px;top:301.6px;width:10.8px;height:11.8px;border-left:1px solid #c4c4c4;border-radius:0 2px 2px 0;background:linear-gradient(#f4f4f4,#d8d8d8)"></div>
<svg style="left:512.2px;top:306px" width="4" height="3"><path d="M0 0 H3.6 L1.8 2.4Z" fill="#111"/></svg>
<div class="t" style="left:477.9px;top:304.6px;font-size:8.4px;color:#333;letter-spacing:-0.582px;"><span id="tx86">Φ1.0</span></div>
<div class="a" style="left:563.8px;top:300.8px;width:47.200000000000045px;height:13.4px;border:1px solid #9c9c9c;border-radius:3px;background:#fff;box-shadow:0 1px 0 #c8c8c8"></div>
<div class="a" style="left:599.5px;top:301.6px;width:10.8px;height:11.8px;border-left:1px solid #c4c4c4;border-radius:0 2px 2px 0;background:linear-gradient(#f4f4f4,#d8d8d8)"></div>
<svg style="left:603.2px;top:306px" width="4" height="3"><path d="M0 0 H3.6 L1.8 2.4Z" fill="#111"/></svg>
<div class="a" style="left:190.2px;top:320.2px;width:435.2px;height:61.6px;border:1px solid #6a8abd;box-shadow:inset 1px 1px 0 #d3deec, inset -1px -1px 0 #e4ebf5"></div>
<div class="a" style="left:189.8px;top:381.8px;width:435.6px;height:1.5px;background:#d3deec"></div>
<div class="t" style="left:191px;top:336.1px;font-size:8.5px;color:#38389a;letter-spacing:-0.357px;-webkit-text-stroke:0.2px;"><span id="tx87">初期电流（A)</span></div>
<div class="t" style="left:255.6px;top:328.4px;font-size:8.2px;color:#38389a;letter-spacing:0.133px;-webkit-text-stroke:0.2px;"><span id="tx88">下限值</span></div>
<div class="t" style="left:255.6px;top:357.3px;font-size:8.2px;color:#38389a;letter-spacing:0.133px;-webkit-text-stroke:0.2px;"><span id="tx89">上限值</span></div>
<div class="a" style="left:199.4px;top:350px;width:40px;height:12.2px;border-radius:6.1px;background:#e8e8e8;border:1px solid #8cb4e8"></div>
<div class="t" style="left:202.5px;top:353.1672px;font-size:8.4px;color:#333;letter-spacing:-0.134px;-webkit-text-stroke:0.25px #333;"><span id="tx90">100.0</span></div>
<div class="a" style="left:249px;top:336.9px;width:40.75px;height:11.8px;border-radius:5.9px;background:#e8e8e8;border:1px solid #8cb4e8"></div>
<div class="t" style="left:252.1px;top:339.86719999999997px;font-size:8.4px;color:#333;letter-spacing:0.047px;-webkit-text-stroke:0.25px #333;"><span id="tx91">80.0</span></div>
<div class="a" style="left:249px;top:366.3px;width:40.75px;height:12px;border-radius:6.0px;background:#e8e8e8;border:1px solid #8cb4e8"></div>
<div class="t" style="left:252.1px;top:369.36719999999997px;font-size:8.4px;color:#333;letter-spacing:-0.134px;-webkit-text-stroke:0.25px #333;"><span id="tx92">120.0</span></div>
<svg style="left:240px;top:345px" width="9" height="31.600000000000023"><path d="M7.5 1 Q3.5 1 3.5 5 V11.300000000000011 Q3.5 15.300000000000011 0.6 15.300000000000011 Q3.5 15.300000000000011 3.5 19.30000000000001 V26.600000000000023 Q3.5 30.600000000000023 7.5 30.600000000000023" fill="none" stroke="#5b9be8" stroke-width="1.9"/></svg>
<div class="t" style="left:336px;top:336.1px;font-size:8.5px;color:#38389a;letter-spacing:-0.357px;-webkit-text-stroke:0.2px;"><span id="tx93">焊接电流（A)</span></div>
<div class="t" style="left:400.6px;top:328.4px;font-size:8.2px;color:#38389a;letter-spacing:0.133px;-webkit-text-stroke:0.2px;"><span id="tx94">下限值</span></div>
<div class="t" style="left:400.6px;top:357.3px;font-size:8.2px;color:#38389a;letter-spacing:0.133px;-webkit-text-stroke:0.2px;"><span id="tx95">上限值</span></div>
<div class="a" style="left:344.4px;top:351.7px;width:40px;height:11.8px;border-radius:5.9px;background:#70a4ea"></div>
<div class="t" style="left:346.9px;top:354.6672px;font-size:8.4px;color:#000;font-weight:bold;letter-spacing:-0.134px;-webkit-text-stroke:0.15px #000;"><span id="tx96">200.0</span></div>
<div class="a" style="left:394px;top:336.9px;width:40.75px;height:11.8px;border-radius:5.9px;background:#70a4ea"></div>
<div class="t" style="left:396.5px;top:339.86719999999997px;font-size:8.4px;color:#000;font-weight:bold;letter-spacing:-0.134px;-webkit-text-stroke:0.15px #000;"><span id="tx97">180.0</span></div>
<div class="a" style="left:394px;top:366.3px;width:40.75px;height:12px;border-radius:6.0px;background:#70a4ea"></div>
<div class="t" style="left:396.5px;top:369.36719999999997px;font-size:8.4px;color:#000;font-weight:bold;letter-spacing:-0.134px;-webkit-text-stroke:0.15px #000;"><span id="tx98">220.0</span></div>
<svg style="left:385px;top:345px" width="9" height="31.600000000000023"><path d="M7.5 1 Q3.5 1 3.5 5 V11.300000000000011 Q3.5 15.300000000000011 0.6 15.300000000000011 Q3.5 15.300000000000011 3.5 19.30000000000001 V26.600000000000023 Q3.5 30.600000000000023 7.5 30.600000000000023" fill="none" stroke="#5b9be8" stroke-width="1.9"/></svg>
<div class="t" style="left:480.2px;top:336.1px;font-size:8.5px;color:#38389a;letter-spacing:-0.357px;-webkit-text-stroke:0.2px;"><span id="tx99">收弧电流（A)</span></div>
<div class="t" style="left:544.8px;top:328.4px;font-size:8.2px;color:#38389a;letter-spacing:0.133px;-webkit-text-stroke:0.2px;"><span id="tx100">下限值</span></div>
<div class="t" style="left:544.8px;top:357.3px;font-size:8.2px;color:#38389a;letter-spacing:0.133px;-webkit-text-stroke:0.2px;"><span id="tx101">上限值</span></div>
<div class="a" style="left:488.6px;top:352px;width:40px;height:11.8px;border-radius:5.9px;background:#70a4ea"></div>
<div class="t" style="left:491.1px;top:354.9672px;font-size:8.4px;color:#000;font-weight:bold;letter-spacing:-0.134px;-webkit-text-stroke:0.15px #000;"><span id="tx102">150.0</span></div>
<div class="a" style="left:538.2px;top:336.9px;width:40.75px;height:11.8px;border-radius:5.9px;background:#70a4ea"></div>
<div class="t" style="left:540.7px;top:339.86719999999997px;font-size:8.4px;color:#000;font-weight:bold;letter-spacing:-0.134px;-webkit-text-stroke:0.15px #000;"><span id="tx103">120.0</span></div>
<div class="a" style="left:538.2px;top:366.3px;width:40.75px;height:12px;border-radius:6.0px;background:#70a4ea"></div>
<div class="t" style="left:540.7px;top:369.36719999999997px;font-size:8.4px;color:#000;font-weight:bold;letter-spacing:-0.134px;-webkit-text-stroke:0.15px #000;"><span id="tx104">180.0</span></div>
<svg style="left:529.2px;top:345px" width="9" height="31.600000000000023"><path d="M7.5 1 Q3.5 1 3.5 5 V11.300000000000011 Q3.5 15.300000000000011 0.6 15.300000000000011 Q3.5 15.300000000000011 3.5 19.30000000000001 V26.600000000000023 Q3.5 30.600000000000023 7.5 30.600000000000023" fill="none" stroke="#5b9be8" stroke-width="1.9"/></svg>
<div class="a" style="left:190px;top:383.2px;width:435.4px;height:83.4px;border:1px solid #6a8abd;box-shadow:inset 1px 1px 0 #d3deec, inset -1px -1px 0 #e4ebf5"></div>
<div class="t" style="left:211px;top:391.90px;font-size:8.4px;color:#38389a;letter-spacing:0.519px;-webkit-text-stroke:0.2px;"><span id="tx105">初期丝速（m/min)</span></div>
<div class="t" style="left:225px;top:414.60px;font-size:8.4px;color:#38389a;letter-spacing:0.489px;-webkit-text-stroke:0.2px;"><span id="tx106">弧长调节（V)</span></div>
<div class="t" style="left:236px;top:435.70px;font-size:8.4px;color:#38389a;letter-spacing:0.367px;-webkit-text-stroke:0.2px;"><span id="tx107">脉冲丝速偏差</span></div>
<div class="t" style="left:236px;top:453.00px;font-size:8.4px;color:#38389a;letter-spacing:0.367px;-webkit-text-stroke:0.2px;"><span id="tx108">峰值弧长修正</span></div>
<div class="t" style="left:356px;top:391.90px;font-size:8.4px;color:#38389a;letter-spacing:0.519px;-webkit-text-stroke:0.2px;"><span id="tx109">焊接丝速（m/min)</span></div>
<div class="t" style="left:392px;top:414.60px;font-size:8.4px;color:#38389a;letter-spacing:0.425px;-webkit-text-stroke:0.2px;"><span id="tx110">脉冲频率</span></div>
<div class="t" style="left:381px;top:453.00px;font-size:8.4px;color:#38389a;letter-spacing:0.367px;-webkit-text-stroke:0.2px;"><span id="tx111">基值弧长修正</span></div>
<div class="t" style="left:500.6px;top:392.10px;font-size:8.4px;color:#38389a;letter-spacing:0.464px;-webkit-text-stroke:0.2px;"><span id="tx112">收弧丝速（m/min)</span></div>
<div class="t" style="left:528.2px;top:414.90px;font-size:8.4px;color:#38389a;letter-spacing:0.460px;-webkit-text-stroke:0.2px;"><span id="tx113">双脉冲比率</span></div>
<div class="a" style="left:287px;top:389.5px;width:38px;height:12px;border-radius:6.0px;background:#70a4ea"></div>
<div class="t" style="left:289.5px;top:392.50px;font-size:8.3px;color:#000;font-weight:bold;letter-spacing:-0.039px;-webkit-text-stroke:0.2px #000;"><span id="tx114">15.0</span></div>
<div class="a" style="left:287px;top:412.5px;width:38px;height:12px;border-radius:6.0px;background:#70a4ea"></div>
<div class="t" style="left:289.5px;top:415.50px;font-size:8.3px;color:#000;font-weight:bold;-webkit-text-stroke:0.2px #000;"><span id="tx115">1</span></div>
<div class="a" style="left:287px;top:433.7px;width:38px;height:11.8px;border-radius:5.9px;background:#70a4ea"></div>
<div class="t" style="left:289.5px;top:436.70px;font-size:8.3px;color:#000;font-weight:bold;letter-spacing:-0.039px;-webkit-text-stroke:0.2px #000;"><span id="tx116">10.0</span></div>
<div class="a" style="left:287px;top:451.7px;width:38px;height:11.8px;border-radius:5.9px;background:#70a4ea"></div>
<div class="t" style="left:289.5px;top:454.70px;font-size:8.3px;color:#000;font-weight:bold;-webkit-text-stroke:0.2px #000;"><span id="tx117">5</span></div>
<div class="a" style="left:432px;top:389.5px;width:37.4px;height:12px;border-radius:6.0px;background:#70a4ea"></div>
<div class="t" style="left:434.5px;top:392.50px;font-size:8.3px;color:#000;font-weight:bold;letter-spacing:-0.039px;-webkit-text-stroke:0.2px #000;"><span id="tx118">20.0</span></div>
<div class="a" style="left:432px;top:412.5px;width:37.4px;height:12px;border-radius:6.0px;background:#70a4ea"></div>
<div class="t" style="left:434.5px;top:415.50px;font-size:8.3px;color:#000;font-weight:bold;-webkit-text-stroke:0.2px #000;"><span id="tx119">244</span></div>
<div class="a" style="left:432px;top:451.7px;width:37.4px;height:11.8px;border-radius:5.9px;background:#70a4ea"></div>
<div class="t" style="left:434.5px;top:454.70px;font-size:8.3px;color:#000;font-weight:bold;-webkit-text-stroke:0.2px #000;"><span id="tx120">5</span></div>
<div class="a" style="left:576.2px;top:389.5px;width:38.2px;height:12px;border-radius:6.0px;background:#70a4ea"></div>
<div class="t" style="left:578.7px;top:392.50px;font-size:8.3px;color:#000;font-weight:bold;letter-spacing:-0.039px;-webkit-text-stroke:0.2px #000;"><span id="tx121">18.0</span></div>
<div class="a" style="left:576.2px;top:412.5px;width:38.2px;height:12px;border-radius:6.0px;background:#70a4ea"></div>
<div class="t" style="left:578.7px;top:415.50px;font-size:8.3px;color:#000;font-weight:bold;-webkit-text-stroke:0.2px #000;"><span id="tx122">10</span></div>
<div class="a" style="left:631.2px;top:319.8px;width:145.6px;height:147px;border:1px solid #6a8abd;box-shadow:inset 1px 1px 0 #d3deec, inset -1px -1px 0 #e4ebf5"></div>
<div class="t" style="left:635.2px;top:323.74px;font-size:7.6px;color:#4a4a8c;-webkit-text-stroke:0.1px;"><span id="tx123">电弧力</span></div>
<div class="a" style="left:703.9px;top:321.50px;width:37.8px;height:10.2px;border-radius:5.1px;background:#70a4ea"></div>
<div class="t" style="left:706.3px;top:323.00px;font-size:9px;color:#000;font-weight:bold;-webkit-text-stroke:0.15px #000;"><span id="tx124">5</span></div>
<div class="t" style="left:635.2px;top:337.04px;font-size:7.6px;color:#4a4a8c;-webkit-text-stroke:0.1px;"><span id="tx125">热引弧</span></div>
<div class="a" style="left:703.9px;top:334.80px;width:37.8px;height:10.2px;border-radius:5.1px;background:#70a4ea"></div>
<div class="t" style="left:706.3px;top:336.30px;font-size:9px;color:#000;font-weight:bold;-webkit-text-stroke:0.15px #000;"><span id="tx126">1</span></div>
<div class="t" style="left:635.2px;top:350.34px;font-size:7.6px;color:#4a4a8c;-webkit-text-stroke:0.1px;"><span id="tx127">热引弧电压</span></div>
<div class="a" style="left:703.9px;top:348.10px;width:37.8px;height:10.2px;border-radius:5.1px;background:#70a4ea"></div>
<div class="t" style="left:706.3px;top:349.60px;font-size:9px;color:#000;font-weight:bold;-webkit-text-stroke:0.15px #000;"><span id="tx128">1</span></div>
<div class="t" style="left:635.2px;top:363.64px;font-size:7.6px;color:#4a4a8c;-webkit-text-stroke:0.1px;"><span id="tx129">热引弧时间</span></div>
<div class="a" style="left:703.9px;top:361.40px;width:37.8px;height:10.2px;border-radius:5.1px;background:#70a4ea"></div>
<div class="t" style="left:706.3px;top:362.90px;font-size:9px;color:#000;font-weight:bold;-webkit-text-stroke:0.15px #000;"><span id="tx130">1</span></div>
<div class="t" style="left:635.2px;top:376.94px;font-size:7.6px;color:#4a4a8c;-webkit-text-stroke:0.1px;"><span id="tx131">回烧电压</span></div>
<div class="a" style="left:703.9px;top:374.70px;width:37.8px;height:10.2px;border-radius:5.1px;background:#70a4ea"></div>
<div class="t" style="left:706.3px;top:376.20px;font-size:9px;color:#000;font-weight:bold;-webkit-text-stroke:0.15px #000;"><span id="tx132">2</span></div>
<div class="t" style="left:635.2px;top:390.24px;font-size:7.6px;color:#4a4a8c;-webkit-text-stroke:0.1px;"><span id="tx133">回烧时间</span></div>
<div class="a" style="left:703.9px;top:388.00px;width:37.8px;height:10.2px;border-radius:5.1px;background:#70a4ea"></div>
<div class="t" style="left:706.3px;top:389.50px;font-size:9px;color:#000;font-weight:bold;-webkit-text-stroke:0.15px #000;"><span id="tx134">2</span></div>
<div class="t" style="left:635.2px;top:403.54px;font-size:7.6px;color:#4a4a8c;-webkit-text-stroke:0.1px;"><span id="tx135">慢送丝系数</span></div>
<div class="a" style="left:703.9px;top:401.30px;width:37.8px;height:10.2px;border-radius:5.1px;background:#70a4ea"></div>
<div class="t" style="left:635.2px;top:416.84px;font-size:7.6px;color:#4a4a8c;-webkit-text-stroke:0.1px;"><span id="tx136">提前送气（S)</span></div>
<div class="a" style="left:703.9px;top:414.60px;width:37.8px;height:10.2px;border-radius:5.1px;background:#70a4ea"></div>
<div class="t" style="left:706.3px;top:416.10px;font-size:8.4px;color:#000;font-weight:bold;-webkit-text-stroke:0.15px #000;"><span id="tx137">1.0</span></div>
<div class="t" style="left:635.2px;top:430.14px;font-size:7.6px;color:#4a4a8c;-webkit-text-stroke:0.1px;"><span id="tx138">滞后关气（S)</span></div>
<div class="a" style="left:703.9px;top:427.90px;width:37.8px;height:10.2px;border-radius:5.1px;background:#70a4ea"></div>
<div class="t" style="left:706.3px;top:429.40px;font-size:8.4px;color:#000;font-weight:bold;-webkit-text-stroke:0.15px #000;"><span id="tx139">1.2</span></div>
<div class="t" style="left:635.2px;top:443.44px;font-size:7.6px;color:#8a8aa8;-webkit-text-stroke:0.1px;"><span id="tx140">点焊时间（S)</span></div>
<div class="a" style="left:703.9px;top:441.20px;width:37.8px;height:10.2px;border-radius:5.1px;background:#e8e8e8;border:1px solid #8cb4e8"></div>
<div class="t" style="left:706.3px;top:443.00px;font-size:8.4px;color:#555;"><span id="tx141">1.5</span></div>
<div class="t" style="left:632.4px;top:456.74px;font-size:7.6px;color:#4a4a8c;-webkit-text-stroke:0.1px;"><span id="tx142">气体流量</span></div>
<div class="a" style="left:703.9px;top:454.50px;width:37.8px;height:10.2px;border-radius:5.1px;background:#70a4ea"></div>
<div class="a" style="left:779px;top:294px;width:10px;height:192px;background:#f0f0f0"></div>
<svg style="left:779px;top:296px" width="10" height="10"><path d="M2.5 6.5 L5 4 L7.5 6.5" fill="none" stroke="#b8b8b8" stroke-width="1"/></svg>
<svg style="left:779px;top:478px" width="10" height="10"><path d="M2.5 4 L5 6.5 L7.5 4" fill="none" stroke="#b8b8b8" stroke-width="1"/></svg>
<div class="a" style="left:189.8px;top:467.6px;width:586.5px;height:16px;background:#d8d8d8;border:1px solid #a8a8a8;border-top:1px solid #c8c8c8;border-radius:0 0 6px 6px"></div>
<div class="a" style="left:299.5px;top:468.6px;width:57.0px;height:13.2px;border-radius:6.6px;background:#1f5496;box-shadow:0 0 0 1px #f4f4f4, 0 1px 1px 1px #9a9a9a"></div>
<div class="t" style="left:178.0px;width:300px;text-align:center;top:471.6px;font-size:7.2px;color:#fff;letter-spacing:0.200px;"><span id="tx143">添加</span></div>
<div class="a" style="left:387px;top:468.6px;width:68.80000000000001px;height:13.2px;border-radius:6.6px;background:#1f5496;box-shadow:0 0 0 1px #f4f4f4, 0 1px 1px 1px #9a9a9a"></div>
<div class="t" style="left:271.4px;width:300px;text-align:center;top:471.6px;font-size:7.2px;color:#fff;letter-spacing:0.143px;"><span id="tx144">下发参数到面板</span></div>
</body></html>
